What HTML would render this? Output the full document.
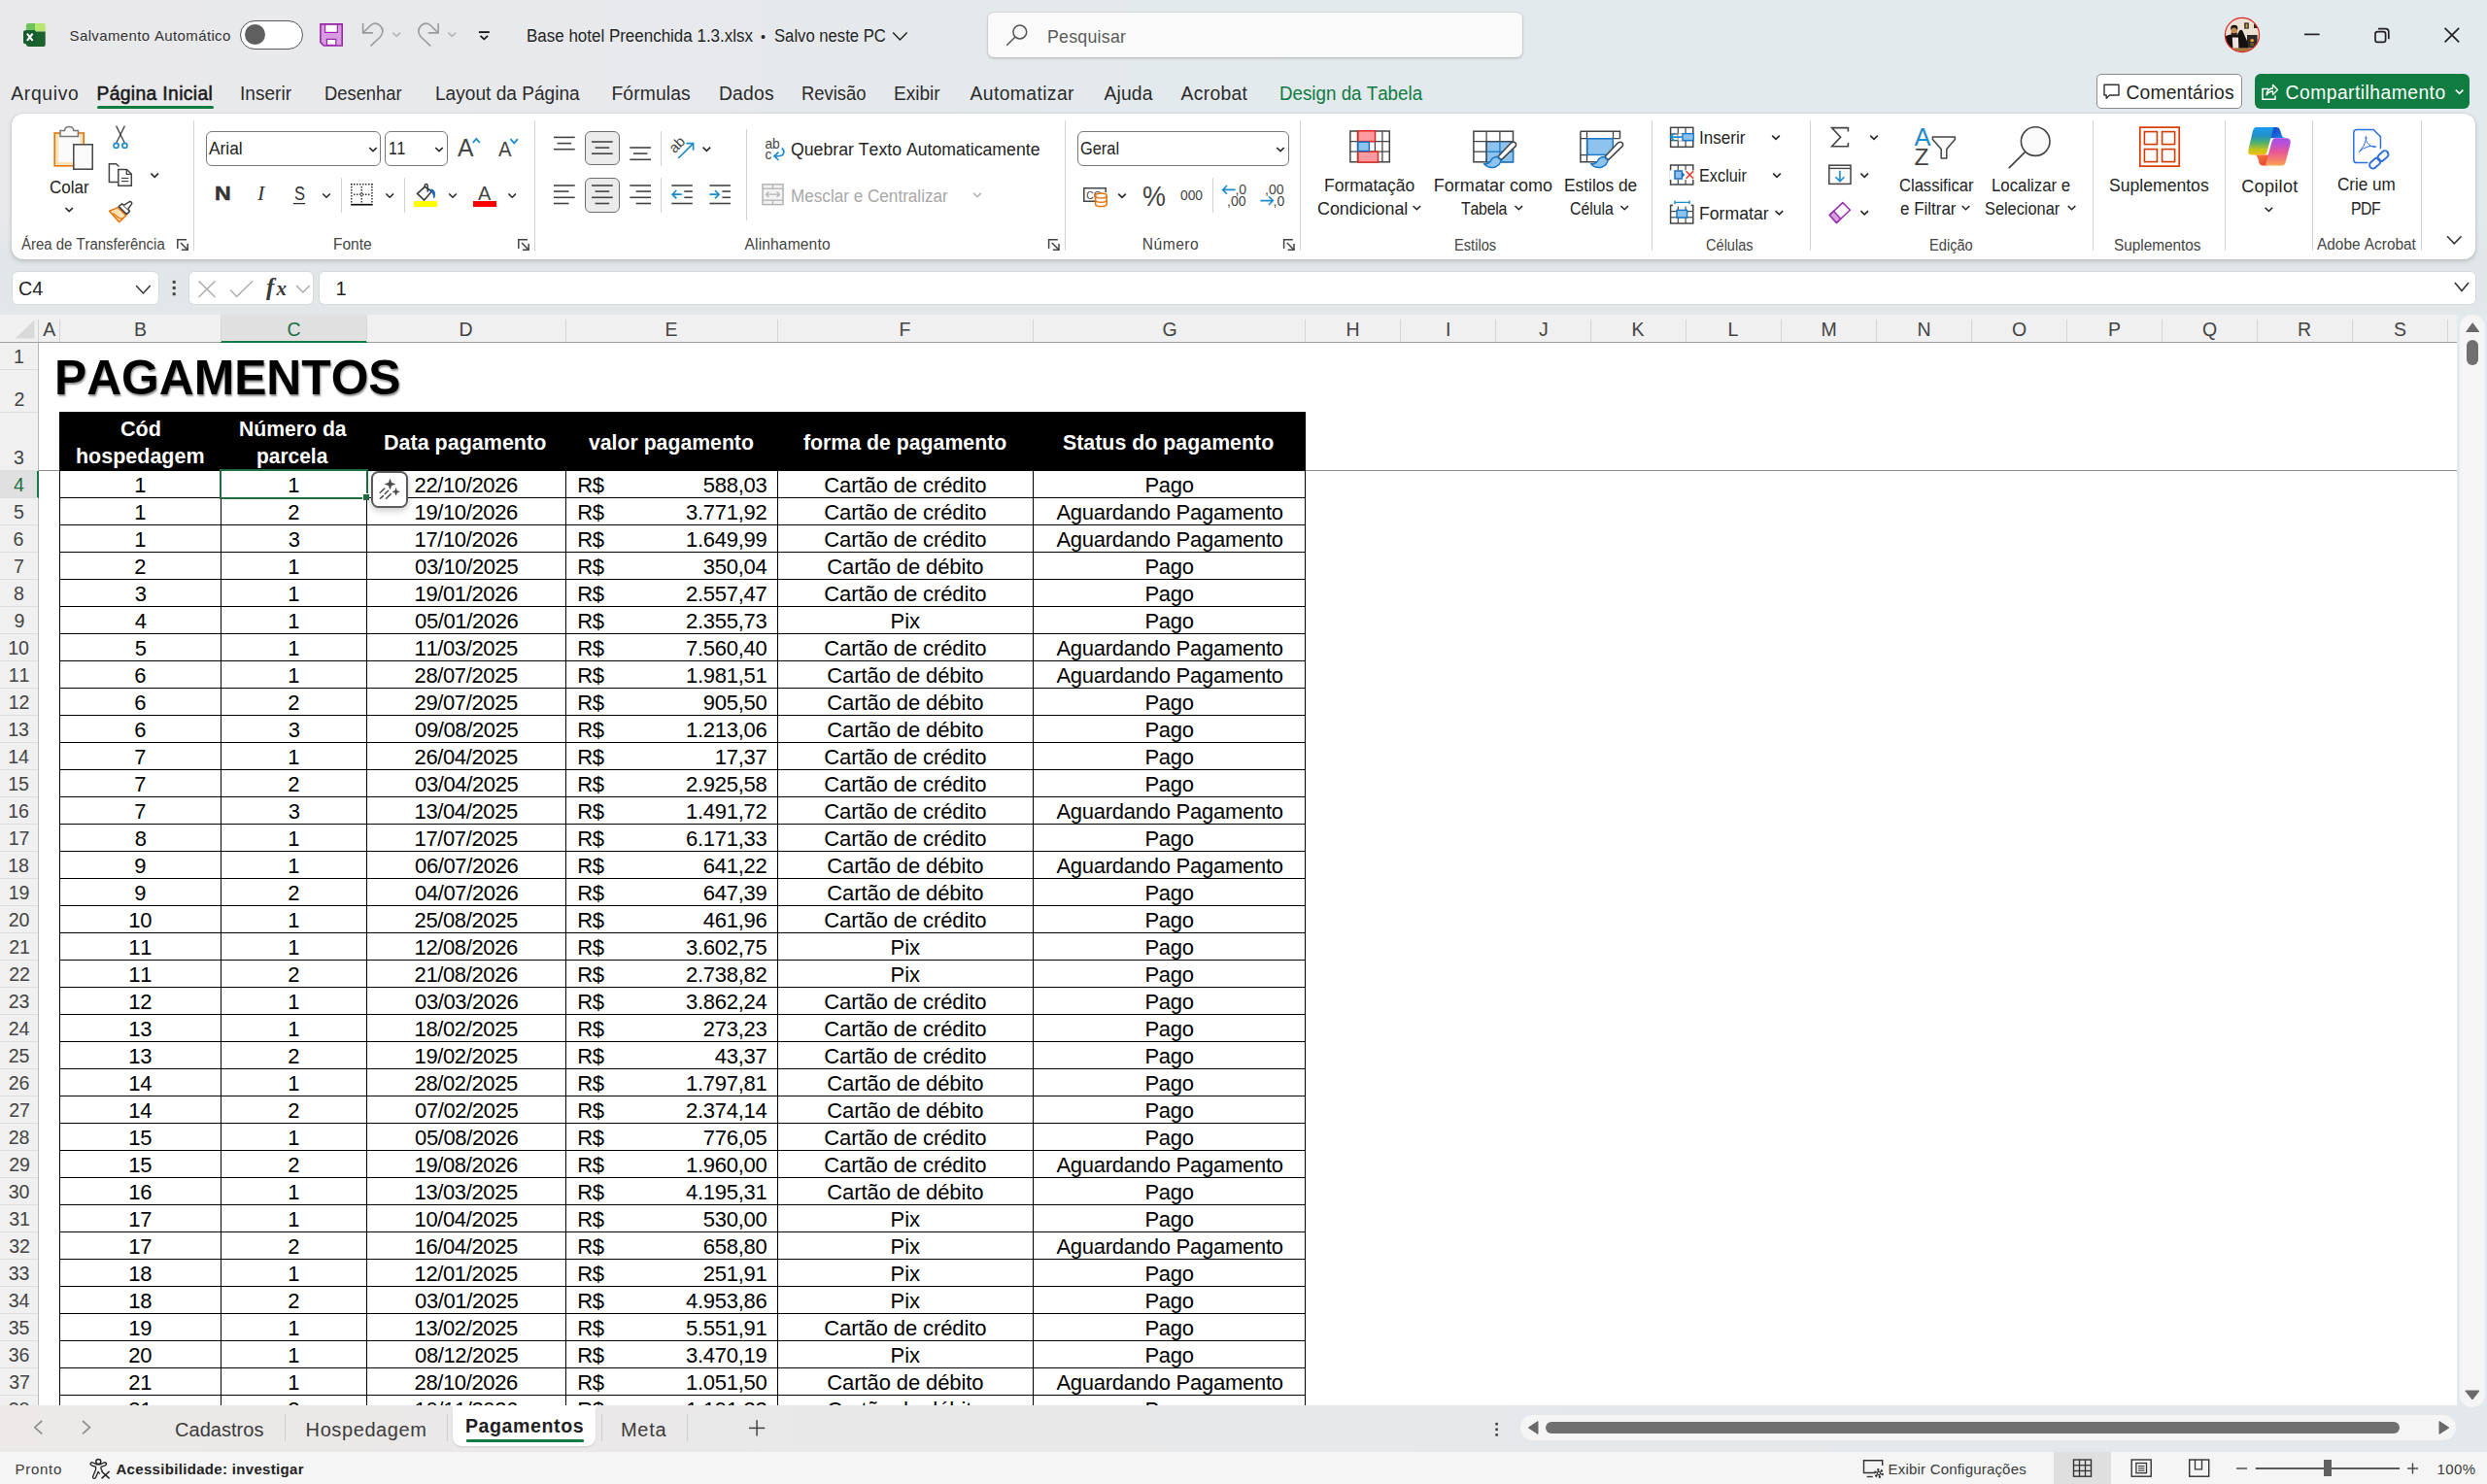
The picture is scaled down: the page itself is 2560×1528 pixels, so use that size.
<!DOCTYPE html>
<html lang="pt-BR"><head><meta charset="utf-8"><title>Base hotel Preenchida 1.3.xlsx - Excel</title>
<style>
html,body{margin:0;padding:0}
body{width:2560px;height:1528px;overflow:hidden;position:relative;font-family:"Liberation Sans",sans-serif;
background:linear-gradient(90deg,#e9e9eb 0%,#e7e9ec 28%,#e3e9ec 42%,#e2eaee 100%);}
#r{position:absolute;left:0;top:0;width:2560px;height:1528px;overflow:hidden}
#r>div{position:absolute}
#r>span{position:absolute;white-space:pre;line-height:1;font-kerning:none}
#r>svg{position:absolute;left:0;top:0}
.s{font-family:"Liberation Serif",serif}
</style></head>
<body><div id="r">
<div style="left:1016.5px;top:13px;width:550.5px;height:46px;background:#fafafa;border-radius:6px;box-shadow:0 1px 3px rgba(0,0,0,.22),0 0 0 1px rgba(0,0,0,.04);"></div>
<div style="left:247px;top:21px;width:63px;height:28px;background:#fff;border:1.3px solid #555;border-radius:16px;"></div>
<div style="left:252px;top:25.2px;width:21px;height:21px;background:#5f5f5f;border-radius:50%;"></div>
<div style="left:2157.5px;top:76px;width:150px;height:35.5px;background:#fff;border:1px solid #8a8a8a;border-radius:5px;box-sizing:border-box;"></div>
<div style="left:2321px;top:76px;width:221px;height:36px;background:#107c41;border-radius:6px;"></div>
<div style="left:100px;top:109.3px;width:120px;height:3px;background:#107c41;border-radius:2px;"></div>
<div style="left:0px;top:225px;width:2560px;height:99px;background:linear-gradient(180deg, rgba(225,230,233,0) 0%, #e1e6e9 42%, #e2e7ea 100%);"></div>
<div style="left:12px;top:117px;width:2536px;height:150px;background:#fff;border-radius:12px;box-shadow:0 2px 5px rgba(0,0,0,.18),0 0 2px rgba(0,0,0,.10);"></div>
<div style="left:199.1px;top:124px;width:1px;height:134px;background:#d4d4d4;"></div>
<div style="left:550.0px;top:124px;width:1px;height:134px;background:#d4d4d4;"></div>
<div style="left:1096.0px;top:124px;width:1px;height:134px;background:#d4d4d4;"></div>
<div style="left:1338.0px;top:124px;width:1px;height:134px;background:#d4d4d4;"></div>
<div style="left:1700.1px;top:124px;width:1px;height:134px;background:#d4d4d4;"></div>
<div style="left:1863.1px;top:124px;width:1px;height:134px;background:#d4d4d4;"></div>
<div style="left:2154.1px;top:124px;width:1px;height:134px;background:#d4d4d4;"></div>
<div style="left:2289.9px;top:124px;width:1px;height:134px;background:#d4d4d4;"></div>
<div style="left:2380.0px;top:124px;width:1px;height:134px;background:#d4d4d4;"></div>
<div style="left:2491.9px;top:124px;width:1px;height:134px;background:#d4d4d4;"></div>
<div style="left:768px;top:133px;width:1px;height:94px;background:#d4d4d4;"></div>
<div style="left:351.1px;top:183px;width:1px;height:35.599999999999994px;background:#d4d4d4;"></div>
<div style="left:415.9px;top:183px;width:1px;height:35.599999999999994px;background:#d4d4d4;"></div>
<div style="left:679.9px;top:135px;width:1px;height:35.5px;background:#d4d4d4;"></div>
<div style="left:679.9px;top:183.4px;width:1px;height:35.19999999999999px;background:#d4d4d4;"></div>
<div style="left:1248.0px;top:183.4px;width:1px;height:35.19999999999999px;background:#d4d4d4;"></div>
<div style="left:212.3px;top:135.3px;width:180.2px;height:35.4px;border:1px solid #7a7a7a;border-radius:6px;box-sizing:border-box;background:#fff;"></div>
<div style="left:396.2px;top:135.3px;width:64.4px;height:35.4px;border:1px solid #7a7a7a;border-radius:6px;box-sizing:border-box;background:#fff;"></div>
<div style="left:1109.2px;top:135.3px;width:217.4px;height:35.4px;border:1px solid #7a7a7a;border-radius:6px;box-sizing:border-box;background:#fff;"></div>
<div style="left:602.2px;top:135.3px;width:35.5px;height:35.2px;border:1px solid #6f6f6f;border-radius:6px;box-sizing:border-box;background:#ebebeb;"></div>
<div style="left:602.2px;top:183.4px;width:35.5px;height:35.2px;border:1px solid #6f6f6f;border-radius:6px;box-sizing:border-box;background:#ebebeb;"></div>
<div style="left:12.8px;top:279.6px;width:150.6px;height:33.5px;background:#fff;border-radius:5.5px;box-shadow:0 0 0 1px rgba(0,0,0,.05);"></div>
<div style="left:195px;top:279.5px;width:126.7px;height:33.5px;background:#fff;border-radius:5px;box-shadow:0 0 0 1px rgba(0,0,0,.06);"></div>
<div style="left:329px;top:279.5px;width:2219px;height:33.5px;background:#fff;border-radius:5px;box-shadow:0 0 0 1px rgba(0,0,0,.06);"></div>
<div style="left:0px;top:324px;width:2529px;height:1123px;background:#fff;"></div>
<div style="left:0px;top:324px;width:2529px;height:28px;background:#f0f0f0;"></div>
<div style="left:0px;top:352px;width:2529px;height:1px;background:#a0a0a0;"></div>
<div style="left:0px;top:353px;width:39.5px;height:1094px;background:#f0f0f0;"></div>
<div style="left:39px;top:353px;width:1px;height:1094px;background:#b8b8b8;"></div>
<div style="left:2532px;top:324px;width:26px;height:1124.7px;background:#f5f5f5;border-radius:13px;"></div>
<div style="left:2539px;top:350.4px;width:12px;height:25.2px;background:#707070;border-radius:6px;"></div>
<div style="left:227.4px;top:324px;width:150.6px;height:28px;background:#e0e0e0;"></div>
<div style="left:227.4px;top:350.6px;width:150.6px;height:2.2px;background:#107c41;"></div>
<div style="left:39px;top:329px;width:1px;height:23px;background:#d0d0d0;"></div>
<div style="left:61px;top:329px;width:1px;height:23px;background:#d6d6d6;"></div>
<div style="left:227px;top:329px;width:1px;height:23px;background:#d6d6d6;"></div>
<div style="left:377px;top:329px;width:1px;height:23px;background:#d6d6d6;"></div>
<div style="left:582px;top:329px;width:1px;height:23px;background:#d6d6d6;"></div>
<div style="left:800px;top:329px;width:1px;height:23px;background:#d6d6d6;"></div>
<div style="left:1063px;top:329px;width:1px;height:23px;background:#d6d6d6;"></div>
<div style="left:1343px;top:329px;width:1px;height:23px;background:#d6d6d6;"></div>
<div style="left:1441px;top:329px;width:1px;height:23px;background:#d6d6d6;"></div>
<div style="left:1539px;top:329px;width:1px;height:23px;background:#d6d6d6;"></div>
<div style="left:1637px;top:329px;width:1px;height:23px;background:#d6d6d6;"></div>
<div style="left:1735px;top:329px;width:1px;height:23px;background:#d6d6d6;"></div>
<div style="left:1833px;top:329px;width:1px;height:23px;background:#d6d6d6;"></div>
<div style="left:1931px;top:329px;width:1px;height:23px;background:#d6d6d6;"></div>
<div style="left:2029px;top:329px;width:1px;height:23px;background:#d6d6d6;"></div>
<div style="left:2127px;top:329px;width:1px;height:23px;background:#d6d6d6;"></div>
<div style="left:2225px;top:329px;width:1px;height:23px;background:#d6d6d6;"></div>
<div style="left:2323px;top:329px;width:1px;height:23px;background:#d6d6d6;"></div>
<div style="left:2421px;top:329px;width:1px;height:23px;background:#d6d6d6;"></div>
<div style="left:2519px;top:329px;width:1px;height:23px;background:#d6d6d6;"></div>
<span style="left:44.25px;top:330.00px;font-size:19.5px;color:#444;">A</span>
<span style="left:138.00px;top:330.00px;font-size:19.5px;color:#444;">B</span>
<span style="left:295.50px;top:330.00px;font-size:19.5px;color:#1e6e42;">C</span>
<span style="left:472.50px;top:330.00px;font-size:19.5px;color:#444;">D</span>
<span style="left:684.50px;top:330.00px;font-size:19.5px;color:#444;">E</span>
<span style="left:925.50px;top:330.00px;font-size:19.5px;color:#444;">F</span>
<span style="left:1196.50px;top:330.00px;font-size:19.5px;color:#444;">G</span>
<span style="left:1385.50px;top:330.00px;font-size:19.5px;color:#444;">H</span>
<span style="left:1488.00px;top:330.00px;font-size:19.5px;color:#444;">I</span>
<span style="left:1584.00px;top:330.00px;font-size:19.5px;color:#444;">J</span>
<span style="left:1679.50px;top:330.00px;font-size:19.5px;color:#444;">K</span>
<span style="left:1778.50px;top:330.00px;font-size:19.5px;color:#444;">L</span>
<span style="left:1874.50px;top:330.00px;font-size:19.5px;color:#444;">M</span>
<span style="left:1973.50px;top:330.00px;font-size:19.5px;color:#444;">N</span>
<span style="left:2071.00px;top:330.00px;font-size:19.5px;color:#444;">O</span>
<span style="left:2170.00px;top:330.00px;font-size:19.5px;color:#444;">P</span>
<span style="left:2267.00px;top:330.00px;font-size:19.5px;color:#444;">Q</span>
<span style="left:2365.00px;top:330.00px;font-size:19.5px;color:#444;">R</span>
<span style="left:2464.00px;top:330.00px;font-size:19.5px;color:#444;">S</span>
<div style="left:0px;top:485px;width:39px;height:28px;background:#e0e0e0;"></div>
<div style="left:37.6px;top:485px;width:2.4px;height:28px;background:#107c41;"></div>
<div style="left:0px;top:380.1px;width:39px;height:1px;background:#dedede;"></div>
<span style="left:14.10px;top:358.20px;font-size:19.6px;color:#444;letter-spacing:-0.300px;">1</span>
<div style="left:0px;top:423.5px;width:39px;height:1px;background:#dedede;"></div>
<span style="left:14.60px;top:401.60px;font-size:19.6px;color:#444;letter-spacing:-0.300px;">2</span>
<div style="left:0px;top:484.0px;width:39px;height:1px;background:#dedede;"></div>
<span style="left:14.10px;top:462.10px;font-size:19.6px;color:#444;letter-spacing:-0.300px;">3</span>
<div style="left:0px;top:512.0px;width:39px;height:1px;background:#dedede;"></div>
<span style="left:14.10px;top:490.10px;font-size:19.6px;color:#1e6e42;letter-spacing:-0.300px;">4</span>
<div style="left:0px;top:540.0px;width:39px;height:1px;background:#dedede;"></div>
<span style="left:14.10px;top:518.10px;font-size:19.6px;color:#444;letter-spacing:-0.300px;">5</span>
<div style="left:0px;top:568.0px;width:39px;height:1px;background:#dedede;"></div>
<span style="left:13.60px;top:546.10px;font-size:19.6px;color:#444;letter-spacing:-0.300px;">6</span>
<div style="left:0px;top:596.0px;width:39px;height:1px;background:#dedede;"></div>
<span style="left:14.10px;top:574.10px;font-size:19.6px;color:#444;letter-spacing:-0.300px;">7</span>
<div style="left:0px;top:624.0px;width:39px;height:1px;background:#dedede;"></div>
<span style="left:14.10px;top:602.10px;font-size:19.6px;color:#444;letter-spacing:-0.300px;">8</span>
<div style="left:0px;top:652.0px;width:39px;height:1px;background:#dedede;"></div>
<span style="left:14.60px;top:630.10px;font-size:19.6px;color:#444;letter-spacing:-0.300px;">9</span>
<div style="left:0px;top:680.0px;width:39px;height:1px;background:#dedede;"></div>
<span style="left:8.30px;top:658.10px;font-size:19.6px;color:#444;letter-spacing:-0.300px;">10</span>
<div style="left:0px;top:708.0px;width:39px;height:1px;background:#dedede;"></div>
<span style="left:8.80px;top:686.10px;font-size:19.6px;color:#444;letter-spacing:-0.300px;">11</span>
<div style="left:0px;top:736.0px;width:39px;height:1px;background:#dedede;"></div>
<span style="left:8.80px;top:714.10px;font-size:19.6px;color:#444;letter-spacing:-0.300px;">12</span>
<div style="left:0px;top:764.0px;width:39px;height:1px;background:#dedede;"></div>
<span style="left:8.30px;top:742.10px;font-size:19.6px;color:#444;letter-spacing:-0.300px;">13</span>
<div style="left:0px;top:792.0px;width:39px;height:1px;background:#dedede;"></div>
<span style="left:8.30px;top:770.10px;font-size:19.6px;color:#444;letter-spacing:-0.300px;">14</span>
<div style="left:0px;top:820.0px;width:39px;height:1px;background:#dedede;"></div>
<span style="left:8.30px;top:798.10px;font-size:19.6px;color:#444;letter-spacing:-0.300px;">15</span>
<div style="left:0px;top:848.0px;width:39px;height:1px;background:#dedede;"></div>
<span style="left:8.30px;top:826.10px;font-size:19.6px;color:#444;letter-spacing:-0.300px;">16</span>
<div style="left:0px;top:876.0px;width:39px;height:1px;background:#dedede;"></div>
<span style="left:8.80px;top:854.10px;font-size:19.6px;color:#444;letter-spacing:-0.300px;">17</span>
<div style="left:0px;top:904.0px;width:39px;height:1px;background:#dedede;"></div>
<span style="left:8.30px;top:882.10px;font-size:19.6px;color:#444;letter-spacing:-0.300px;">18</span>
<div style="left:0px;top:932.0px;width:39px;height:1px;background:#dedede;"></div>
<span style="left:8.80px;top:910.10px;font-size:19.6px;color:#444;letter-spacing:-0.300px;">19</span>
<div style="left:0px;top:960.0px;width:39px;height:1px;background:#dedede;"></div>
<span style="left:8.80px;top:938.10px;font-size:19.6px;color:#444;letter-spacing:-0.300px;">20</span>
<div style="left:0px;top:988.0px;width:39px;height:1px;background:#dedede;"></div>
<span style="left:9.30px;top:966.10px;font-size:19.6px;color:#444;letter-spacing:-0.300px;">21</span>
<div style="left:0px;top:1016.0px;width:39px;height:1px;background:#dedede;"></div>
<span style="left:9.30px;top:994.10px;font-size:19.6px;color:#444;letter-spacing:-0.300px;">22</span>
<div style="left:0px;top:1044.0px;width:39px;height:1px;background:#dedede;"></div>
<span style="left:8.80px;top:1022.10px;font-size:19.6px;color:#444;letter-spacing:-0.300px;">23</span>
<div style="left:0px;top:1072.0px;width:39px;height:1px;background:#dedede;"></div>
<span style="left:8.80px;top:1050.10px;font-size:19.6px;color:#444;letter-spacing:-0.300px;">24</span>
<div style="left:0px;top:1100.0px;width:39px;height:1px;background:#dedede;"></div>
<span style="left:8.80px;top:1078.10px;font-size:19.6px;color:#444;letter-spacing:-0.300px;">25</span>
<div style="left:0px;top:1128.0px;width:39px;height:1px;background:#dedede;"></div>
<span style="left:8.80px;top:1106.10px;font-size:19.6px;color:#444;letter-spacing:-0.300px;">26</span>
<div style="left:0px;top:1156.0px;width:39px;height:1px;background:#dedede;"></div>
<span style="left:9.30px;top:1134.10px;font-size:19.6px;color:#444;letter-spacing:-0.300px;">27</span>
<div style="left:0px;top:1184.0px;width:39px;height:1px;background:#dedede;"></div>
<span style="left:8.80px;top:1162.10px;font-size:19.6px;color:#444;letter-spacing:-0.300px;">28</span>
<div style="left:0px;top:1212.0px;width:39px;height:1px;background:#dedede;"></div>
<span style="left:9.30px;top:1190.10px;font-size:19.6px;color:#444;letter-spacing:-0.300px;">29</span>
<div style="left:0px;top:1240.0px;width:39px;height:1px;background:#dedede;"></div>
<span style="left:8.80px;top:1218.10px;font-size:19.6px;color:#444;letter-spacing:-0.300px;">30</span>
<div style="left:0px;top:1268.0px;width:39px;height:1px;background:#dedede;"></div>
<span style="left:9.30px;top:1246.10px;font-size:19.6px;color:#444;letter-spacing:-0.300px;">31</span>
<div style="left:0px;top:1296.0px;width:39px;height:1px;background:#dedede;"></div>
<span style="left:9.30px;top:1274.10px;font-size:19.6px;color:#444;letter-spacing:-0.300px;">32</span>
<div style="left:0px;top:1324.0px;width:39px;height:1px;background:#dedede;"></div>
<span style="left:8.80px;top:1302.10px;font-size:19.6px;color:#444;letter-spacing:-0.300px;">33</span>
<div style="left:0px;top:1352.0px;width:39px;height:1px;background:#dedede;"></div>
<span style="left:8.80px;top:1330.10px;font-size:19.6px;color:#444;letter-spacing:-0.300px;">34</span>
<div style="left:0px;top:1380.0px;width:39px;height:1px;background:#dedede;"></div>
<span style="left:8.80px;top:1358.10px;font-size:19.6px;color:#444;letter-spacing:-0.300px;">35</span>
<div style="left:0px;top:1408.0px;width:39px;height:1px;background:#dedede;"></div>
<span style="left:8.80px;top:1386.10px;font-size:19.6px;color:#444;letter-spacing:-0.300px;">36</span>
<div style="left:0px;top:1436.0px;width:39px;height:1px;background:#dedede;"></div>
<span style="left:9.30px;top:1414.10px;font-size:19.6px;color:#444;letter-spacing:-0.300px;">37</span>
<div style="left:0px;top:1464.0px;width:39px;height:1px;background:#dedede;"></div>
<span style="left:8.80px;top:1442.10px;font-size:19.6px;color:#444;letter-spacing:-0.300px;">38</span>
<div style="left:40px;top:484px;width:2489px;height:1px;background:#8c8c8c;"></div>
<span style="left:55.52px;top:364.00px;font-size:50px;color:#000;font-weight:700;transform:scaleX(0.9949);transform-origin:0 0;text-shadow:1px 1.5px 2px rgba(0,0,0,.45);">PAGAMENTOS</span>
<div style="left:61px;top:424px;width:1283px;height:61px;background:#000;"></div>
<span style="left:123.80px;top:431.00px;font-size:22px;color:#fff;font-weight:700;transform:scaleX(0.9800);transform-origin:0 0;">Cód</span>
<span style="left:77.62px;top:459.00px;font-size:22px;color:#fff;font-weight:700;transform:scaleX(0.9766);transform-origin:0 0;">hospedagem</span>
<span style="left:245.64px;top:431.00px;font-size:22px;color:#fff;font-weight:700;transform:scaleX(0.9627);transform-origin:0 0;">Número da</span>
<span style="left:264.45px;top:459.00px;font-size:22px;color:#fff;font-weight:700;transform:scaleX(0.9516);transform-origin:0 0;">parcela</span>
<span style="left:395.42px;top:445.00px;font-size:22px;color:#fff;font-weight:700;transform:scaleX(0.9776);transform-origin:0 0;">Data pagamento</span>
<span style="left:606.40px;top:445.00px;font-size:22px;color:#fff;font-weight:700;transform:scaleX(0.9652);transform-origin:0 0;">valor pagamento</span>
<span style="left:827.10px;top:445.00px;font-size:22px;color:#fff;font-weight:700;transform:scaleX(0.9670);transform-origin:0 0;">forma de pagamento</span>
<span style="left:1094.20px;top:445.00px;font-size:22px;color:#fff;font-weight:700;transform:scaleX(0.9711);transform-origin:0 0;">Status do pagamento</span>
<div style="left:61px;top:484px;width:1px;height:963px;background:#000;"></div>
<div style="left:227px;top:484px;width:1px;height:963px;background:#000;"></div>
<div style="left:377px;top:484px;width:1px;height:963px;background:#000;"></div>
<div style="left:582px;top:484px;width:1px;height:963px;background:#000;"></div>
<div style="left:800px;top:484px;width:1px;height:963px;background:#000;"></div>
<div style="left:1063px;top:484px;width:1px;height:963px;background:#000;"></div>
<div style="left:1343px;top:484px;width:1px;height:963px;background:#000;"></div>
<div style="left:61px;top:512px;width:1283px;height:1px;background:#000;"></div>
<span style="left:138.30px;top:489.00px;font-size:22px;color:#000;letter-spacing:-0.380px;">1</span>
<span style="left:296.30px;top:489.00px;font-size:22px;color:#000;letter-spacing:-0.380px;">1</span>
<span style="left:426.57px;top:489.00px;font-size:22px;color:#000;letter-spacing:-0.380px;">22/10/2026</span>
<span style="left:594.20px;top:489.00px;font-size:22px;color:#000;letter-spacing:-0.380px;">R$</span>
<span style="left:723.80px;top:489.00px;font-size:22px;color:#000;letter-spacing:-0.250px;">588,03</span>
<span style="left:848.34px;top:489.00px;font-size:22px;color:#000;letter-spacing:-0.100px;">Cartão de crédito</span>
<span style="left:1178.42px;top:489.00px;font-size:22px;color:#000;letter-spacing:-0.260px;">Pago</span>
<div style="left:61px;top:540px;width:1283px;height:1px;background:#000;"></div>
<span style="left:138.30px;top:517.00px;font-size:22px;color:#000;letter-spacing:-0.380px;">1</span>
<span style="left:296.30px;top:517.00px;font-size:22px;color:#000;letter-spacing:-0.380px;">2</span>
<span style="left:426.57px;top:517.00px;font-size:22px;color:#000;letter-spacing:-0.380px;">19/10/2026</span>
<span style="left:594.20px;top:517.00px;font-size:22px;color:#000;letter-spacing:-0.380px;">R$</span>
<span style="left:705.95px;top:517.00px;font-size:22px;color:#000;letter-spacing:-0.250px;">3.771,92</span>
<span style="left:848.34px;top:517.00px;font-size:22px;color:#000;letter-spacing:-0.100px;">Cartão de crédito</span>
<span style="left:1087.43px;top:517.00px;font-size:22px;color:#000;letter-spacing:-0.260px;">Aguardando Pagamento</span>
<div style="left:61px;top:568px;width:1283px;height:1px;background:#000;"></div>
<span style="left:138.30px;top:545.00px;font-size:22px;color:#000;letter-spacing:-0.380px;">1</span>
<span style="left:296.80px;top:545.00px;font-size:22px;color:#000;letter-spacing:-0.380px;">3</span>
<span style="left:426.57px;top:545.00px;font-size:22px;color:#000;letter-spacing:-0.380px;">17/10/2026</span>
<span style="left:594.20px;top:545.00px;font-size:22px;color:#000;letter-spacing:-0.380px;">R$</span>
<span style="left:705.95px;top:545.00px;font-size:22px;color:#000;letter-spacing:-0.250px;">1.649,99</span>
<span style="left:848.34px;top:545.00px;font-size:22px;color:#000;letter-spacing:-0.100px;">Cartão de crédito</span>
<span style="left:1087.43px;top:545.00px;font-size:22px;color:#000;letter-spacing:-0.260px;">Aguardando Pagamento</span>
<div style="left:61px;top:596px;width:1283px;height:1px;background:#000;"></div>
<span style="left:138.30px;top:573.00px;font-size:22px;color:#000;letter-spacing:-0.380px;">2</span>
<span style="left:296.30px;top:573.00px;font-size:22px;color:#000;letter-spacing:-0.380px;">1</span>
<span style="left:427.07px;top:573.00px;font-size:22px;color:#000;letter-spacing:-0.380px;">03/10/2025</span>
<span style="left:594.20px;top:573.00px;font-size:22px;color:#000;letter-spacing:-0.380px;">R$</span>
<span style="left:723.80px;top:573.00px;font-size:22px;color:#000;letter-spacing:-0.250px;">350,04</span>
<span style="left:851.33px;top:573.00px;font-size:22px;color:#000;letter-spacing:-0.100px;">Cartão de débito</span>
<span style="left:1178.42px;top:573.00px;font-size:22px;color:#000;letter-spacing:-0.260px;">Pago</span>
<div style="left:61px;top:624px;width:1283px;height:1px;background:#000;"></div>
<span style="left:138.80px;top:601.00px;font-size:22px;color:#000;letter-spacing:-0.380px;">3</span>
<span style="left:296.30px;top:601.00px;font-size:22px;color:#000;letter-spacing:-0.380px;">1</span>
<span style="left:426.57px;top:601.00px;font-size:22px;color:#000;letter-spacing:-0.380px;">19/01/2026</span>
<span style="left:594.20px;top:601.00px;font-size:22px;color:#000;letter-spacing:-0.380px;">R$</span>
<span style="left:705.95px;top:601.00px;font-size:22px;color:#000;letter-spacing:-0.250px;">2.557,47</span>
<span style="left:848.34px;top:601.00px;font-size:22px;color:#000;letter-spacing:-0.100px;">Cartão de crédito</span>
<span style="left:1178.42px;top:601.00px;font-size:22px;color:#000;letter-spacing:-0.260px;">Pago</span>
<div style="left:61px;top:652px;width:1283px;height:1px;background:#000;"></div>
<span style="left:138.80px;top:629.00px;font-size:22px;color:#000;letter-spacing:-0.380px;">4</span>
<span style="left:296.30px;top:629.00px;font-size:22px;color:#000;letter-spacing:-0.380px;">1</span>
<span style="left:427.07px;top:629.00px;font-size:22px;color:#000;letter-spacing:-0.380px;">05/01/2026</span>
<span style="left:594.20px;top:629.00px;font-size:22px;color:#000;letter-spacing:-0.380px;">R$</span>
<span style="left:705.95px;top:629.00px;font-size:22px;color:#000;letter-spacing:-0.250px;">2.355,73</span>
<span style="left:916.62px;top:629.00px;font-size:22px;color:#000;letter-spacing:-0.100px;">Pix</span>
<span style="left:1178.42px;top:629.00px;font-size:22px;color:#000;letter-spacing:-0.260px;">Pago</span>
<div style="left:61px;top:680px;width:1283px;height:1px;background:#000;"></div>
<span style="left:138.80px;top:657.00px;font-size:22px;color:#000;letter-spacing:-0.380px;">5</span>
<span style="left:296.30px;top:657.00px;font-size:22px;color:#000;letter-spacing:-0.380px;">1</span>
<span style="left:426.57px;top:657.00px;font-size:22px;color:#000;letter-spacing:-0.380px;">11/03/2025</span>
<span style="left:594.20px;top:657.00px;font-size:22px;color:#000;letter-spacing:-0.380px;">R$</span>
<span style="left:705.95px;top:657.00px;font-size:22px;color:#000;letter-spacing:-0.250px;">7.560,40</span>
<span style="left:848.34px;top:657.00px;font-size:22px;color:#000;letter-spacing:-0.100px;">Cartão de crédito</span>
<span style="left:1087.43px;top:657.00px;font-size:22px;color:#000;letter-spacing:-0.260px;">Aguardando Pagamento</span>
<div style="left:61px;top:708px;width:1283px;height:1px;background:#000;"></div>
<span style="left:138.30px;top:685.00px;font-size:22px;color:#000;letter-spacing:-0.380px;">6</span>
<span style="left:296.30px;top:685.00px;font-size:22px;color:#000;letter-spacing:-0.380px;">1</span>
<span style="left:426.57px;top:685.00px;font-size:22px;color:#000;letter-spacing:-0.380px;">28/07/2025</span>
<span style="left:594.20px;top:685.00px;font-size:22px;color:#000;letter-spacing:-0.380px;">R$</span>
<span style="left:705.95px;top:685.00px;font-size:22px;color:#000;letter-spacing:-0.250px;">1.981,51</span>
<span style="left:851.33px;top:685.00px;font-size:22px;color:#000;letter-spacing:-0.100px;">Cartão de débito</span>
<span style="left:1087.43px;top:685.00px;font-size:22px;color:#000;letter-spacing:-0.260px;">Aguardando Pagamento</span>
<div style="left:61px;top:736px;width:1283px;height:1px;background:#000;"></div>
<span style="left:138.30px;top:713.00px;font-size:22px;color:#000;letter-spacing:-0.380px;">6</span>
<span style="left:296.30px;top:713.00px;font-size:22px;color:#000;letter-spacing:-0.380px;">2</span>
<span style="left:426.57px;top:713.00px;font-size:22px;color:#000;letter-spacing:-0.380px;">29/07/2025</span>
<span style="left:594.20px;top:713.00px;font-size:22px;color:#000;letter-spacing:-0.380px;">R$</span>
<span style="left:723.80px;top:713.00px;font-size:22px;color:#000;letter-spacing:-0.250px;">905,50</span>
<span style="left:851.33px;top:713.00px;font-size:22px;color:#000;letter-spacing:-0.100px;">Cartão de débito</span>
<span style="left:1178.42px;top:713.00px;font-size:22px;color:#000;letter-spacing:-0.260px;">Pago</span>
<div style="left:61px;top:764px;width:1283px;height:1px;background:#000;"></div>
<span style="left:138.30px;top:741.00px;font-size:22px;color:#000;letter-spacing:-0.380px;">6</span>
<span style="left:296.80px;top:741.00px;font-size:22px;color:#000;letter-spacing:-0.380px;">3</span>
<span style="left:427.07px;top:741.00px;font-size:22px;color:#000;letter-spacing:-0.380px;">09/08/2025</span>
<span style="left:594.20px;top:741.00px;font-size:22px;color:#000;letter-spacing:-0.380px;">R$</span>
<span style="left:705.95px;top:741.00px;font-size:22px;color:#000;letter-spacing:-0.250px;">1.213,06</span>
<span style="left:851.33px;top:741.00px;font-size:22px;color:#000;letter-spacing:-0.100px;">Cartão de débito</span>
<span style="left:1178.42px;top:741.00px;font-size:22px;color:#000;letter-spacing:-0.260px;">Pago</span>
<div style="left:61px;top:792px;width:1283px;height:1px;background:#000;"></div>
<span style="left:138.30px;top:769.00px;font-size:22px;color:#000;letter-spacing:-0.380px;">7</span>
<span style="left:296.30px;top:769.00px;font-size:22px;color:#000;letter-spacing:-0.380px;">1</span>
<span style="left:426.57px;top:769.00px;font-size:22px;color:#000;letter-spacing:-0.380px;">26/04/2025</span>
<span style="left:594.20px;top:769.00px;font-size:22px;color:#000;letter-spacing:-0.380px;">R$</span>
<span style="left:735.78px;top:769.00px;font-size:22px;color:#000;letter-spacing:-0.250px;">17,37</span>
<span style="left:848.34px;top:769.00px;font-size:22px;color:#000;letter-spacing:-0.100px;">Cartão de crédito</span>
<span style="left:1178.42px;top:769.00px;font-size:22px;color:#000;letter-spacing:-0.260px;">Pago</span>
<div style="left:61px;top:820px;width:1283px;height:1px;background:#000;"></div>
<span style="left:138.30px;top:797.00px;font-size:22px;color:#000;letter-spacing:-0.380px;">7</span>
<span style="left:296.30px;top:797.00px;font-size:22px;color:#000;letter-spacing:-0.380px;">2</span>
<span style="left:427.07px;top:797.00px;font-size:22px;color:#000;letter-spacing:-0.380px;">03/04/2025</span>
<span style="left:594.20px;top:797.00px;font-size:22px;color:#000;letter-spacing:-0.380px;">R$</span>
<span style="left:705.95px;top:797.00px;font-size:22px;color:#000;letter-spacing:-0.250px;">2.925,58</span>
<span style="left:848.34px;top:797.00px;font-size:22px;color:#000;letter-spacing:-0.100px;">Cartão de crédito</span>
<span style="left:1178.42px;top:797.00px;font-size:22px;color:#000;letter-spacing:-0.260px;">Pago</span>
<div style="left:61px;top:848px;width:1283px;height:1px;background:#000;"></div>
<span style="left:138.30px;top:825.00px;font-size:22px;color:#000;letter-spacing:-0.380px;">7</span>
<span style="left:296.80px;top:825.00px;font-size:22px;color:#000;letter-spacing:-0.380px;">3</span>
<span style="left:426.57px;top:825.00px;font-size:22px;color:#000;letter-spacing:-0.380px;">13/04/2025</span>
<span style="left:594.20px;top:825.00px;font-size:22px;color:#000;letter-spacing:-0.380px;">R$</span>
<span style="left:705.95px;top:825.00px;font-size:22px;color:#000;letter-spacing:-0.250px;">1.491,72</span>
<span style="left:848.34px;top:825.00px;font-size:22px;color:#000;letter-spacing:-0.100px;">Cartão de crédito</span>
<span style="left:1087.43px;top:825.00px;font-size:22px;color:#000;letter-spacing:-0.260px;">Aguardando Pagamento</span>
<div style="left:61px;top:876px;width:1283px;height:1px;background:#000;"></div>
<span style="left:138.80px;top:853.00px;font-size:22px;color:#000;letter-spacing:-0.380px;">8</span>
<span style="left:296.30px;top:853.00px;font-size:22px;color:#000;letter-spacing:-0.380px;">1</span>
<span style="left:426.57px;top:853.00px;font-size:22px;color:#000;letter-spacing:-0.380px;">17/07/2025</span>
<span style="left:594.20px;top:853.00px;font-size:22px;color:#000;letter-spacing:-0.380px;">R$</span>
<span style="left:705.95px;top:853.00px;font-size:22px;color:#000;letter-spacing:-0.250px;">6.171,33</span>
<span style="left:848.34px;top:853.00px;font-size:22px;color:#000;letter-spacing:-0.100px;">Cartão de crédito</span>
<span style="left:1178.42px;top:853.00px;font-size:22px;color:#000;letter-spacing:-0.260px;">Pago</span>
<div style="left:61px;top:904px;width:1283px;height:1px;background:#000;"></div>
<span style="left:138.30px;top:881.00px;font-size:22px;color:#000;letter-spacing:-0.380px;">9</span>
<span style="left:296.30px;top:881.00px;font-size:22px;color:#000;letter-spacing:-0.380px;">1</span>
<span style="left:427.07px;top:881.00px;font-size:22px;color:#000;letter-spacing:-0.380px;">06/07/2026</span>
<span style="left:594.20px;top:881.00px;font-size:22px;color:#000;letter-spacing:-0.380px;">R$</span>
<span style="left:723.80px;top:881.00px;font-size:22px;color:#000;letter-spacing:-0.250px;">641,22</span>
<span style="left:851.33px;top:881.00px;font-size:22px;color:#000;letter-spacing:-0.100px;">Cartão de débito</span>
<span style="left:1087.43px;top:881.00px;font-size:22px;color:#000;letter-spacing:-0.260px;">Aguardando Pagamento</span>
<div style="left:61px;top:932px;width:1283px;height:1px;background:#000;"></div>
<span style="left:138.30px;top:909.00px;font-size:22px;color:#000;letter-spacing:-0.380px;">9</span>
<span style="left:296.30px;top:909.00px;font-size:22px;color:#000;letter-spacing:-0.380px;">2</span>
<span style="left:427.07px;top:909.00px;font-size:22px;color:#000;letter-spacing:-0.380px;">04/07/2026</span>
<span style="left:594.20px;top:909.00px;font-size:22px;color:#000;letter-spacing:-0.380px;">R$</span>
<span style="left:723.80px;top:909.00px;font-size:22px;color:#000;letter-spacing:-0.250px;">647,39</span>
<span style="left:851.33px;top:909.00px;font-size:22px;color:#000;letter-spacing:-0.100px;">Cartão de débito</span>
<span style="left:1178.42px;top:909.00px;font-size:22px;color:#000;letter-spacing:-0.260px;">Pago</span>
<div style="left:61px;top:960px;width:1283px;height:1px;background:#000;"></div>
<span style="left:132.37px;top:937.00px;font-size:22px;color:#000;letter-spacing:-0.380px;">10</span>
<span style="left:296.30px;top:937.00px;font-size:22px;color:#000;letter-spacing:-0.380px;">1</span>
<span style="left:426.57px;top:937.00px;font-size:22px;color:#000;letter-spacing:-0.380px;">25/08/2025</span>
<span style="left:594.20px;top:937.00px;font-size:22px;color:#000;letter-spacing:-0.380px;">R$</span>
<span style="left:723.80px;top:937.00px;font-size:22px;color:#000;letter-spacing:-0.250px;">461,96</span>
<span style="left:848.34px;top:937.00px;font-size:22px;color:#000;letter-spacing:-0.100px;">Cartão de crédito</span>
<span style="left:1178.42px;top:937.00px;font-size:22px;color:#000;letter-spacing:-0.260px;">Pago</span>
<div style="left:61px;top:988px;width:1283px;height:1px;background:#000;"></div>
<span style="left:132.37px;top:965.00px;font-size:22px;color:#000;letter-spacing:-0.380px;">11</span>
<span style="left:296.30px;top:965.00px;font-size:22px;color:#000;letter-spacing:-0.380px;">1</span>
<span style="left:426.57px;top:965.00px;font-size:22px;color:#000;letter-spacing:-0.380px;">12/08/2026</span>
<span style="left:594.20px;top:965.00px;font-size:22px;color:#000;letter-spacing:-0.380px;">R$</span>
<span style="left:705.95px;top:965.00px;font-size:22px;color:#000;letter-spacing:-0.250px;">3.602,75</span>
<span style="left:916.62px;top:965.00px;font-size:22px;color:#000;letter-spacing:-0.100px;">Pix</span>
<span style="left:1178.42px;top:965.00px;font-size:22px;color:#000;letter-spacing:-0.260px;">Pago</span>
<div style="left:61px;top:1016px;width:1283px;height:1px;background:#000;"></div>
<span style="left:132.37px;top:993.00px;font-size:22px;color:#000;letter-spacing:-0.380px;">11</span>
<span style="left:296.30px;top:993.00px;font-size:22px;color:#000;letter-spacing:-0.380px;">2</span>
<span style="left:426.57px;top:993.00px;font-size:22px;color:#000;letter-spacing:-0.380px;">21/08/2026</span>
<span style="left:594.20px;top:993.00px;font-size:22px;color:#000;letter-spacing:-0.380px;">R$</span>
<span style="left:705.95px;top:993.00px;font-size:22px;color:#000;letter-spacing:-0.250px;">2.738,82</span>
<span style="left:916.62px;top:993.00px;font-size:22px;color:#000;letter-spacing:-0.100px;">Pix</span>
<span style="left:1178.42px;top:993.00px;font-size:22px;color:#000;letter-spacing:-0.260px;">Pago</span>
<div style="left:61px;top:1044px;width:1283px;height:1px;background:#000;"></div>
<span style="left:132.37px;top:1021.00px;font-size:22px;color:#000;letter-spacing:-0.380px;">12</span>
<span style="left:296.30px;top:1021.00px;font-size:22px;color:#000;letter-spacing:-0.380px;">1</span>
<span style="left:427.07px;top:1021.00px;font-size:22px;color:#000;letter-spacing:-0.380px;">03/03/2026</span>
<span style="left:594.20px;top:1021.00px;font-size:22px;color:#000;letter-spacing:-0.380px;">R$</span>
<span style="left:705.95px;top:1021.00px;font-size:22px;color:#000;letter-spacing:-0.250px;">3.862,24</span>
<span style="left:848.34px;top:1021.00px;font-size:22px;color:#000;letter-spacing:-0.100px;">Cartão de crédito</span>
<span style="left:1178.42px;top:1021.00px;font-size:22px;color:#000;letter-spacing:-0.260px;">Pago</span>
<div style="left:61px;top:1072px;width:1283px;height:1px;background:#000;"></div>
<span style="left:132.37px;top:1049.00px;font-size:22px;color:#000;letter-spacing:-0.380px;">13</span>
<span style="left:296.30px;top:1049.00px;font-size:22px;color:#000;letter-spacing:-0.380px;">1</span>
<span style="left:426.57px;top:1049.00px;font-size:22px;color:#000;letter-spacing:-0.380px;">18/02/2025</span>
<span style="left:594.20px;top:1049.00px;font-size:22px;color:#000;letter-spacing:-0.380px;">R$</span>
<span style="left:723.80px;top:1049.00px;font-size:22px;color:#000;letter-spacing:-0.250px;">273,23</span>
<span style="left:848.34px;top:1049.00px;font-size:22px;color:#000;letter-spacing:-0.100px;">Cartão de crédito</span>
<span style="left:1178.42px;top:1049.00px;font-size:22px;color:#000;letter-spacing:-0.260px;">Pago</span>
<div style="left:61px;top:1100px;width:1283px;height:1px;background:#000;"></div>
<span style="left:132.37px;top:1077.00px;font-size:22px;color:#000;letter-spacing:-0.380px;">13</span>
<span style="left:296.30px;top:1077.00px;font-size:22px;color:#000;letter-spacing:-0.380px;">2</span>
<span style="left:426.57px;top:1077.00px;font-size:22px;color:#000;letter-spacing:-0.380px;">19/02/2025</span>
<span style="left:594.20px;top:1077.00px;font-size:22px;color:#000;letter-spacing:-0.380px;">R$</span>
<span style="left:735.78px;top:1077.00px;font-size:22px;color:#000;letter-spacing:-0.250px;">43,37</span>
<span style="left:848.34px;top:1077.00px;font-size:22px;color:#000;letter-spacing:-0.100px;">Cartão de crédito</span>
<span style="left:1178.42px;top:1077.00px;font-size:22px;color:#000;letter-spacing:-0.260px;">Pago</span>
<div style="left:61px;top:1128px;width:1283px;height:1px;background:#000;"></div>
<span style="left:132.37px;top:1105.00px;font-size:22px;color:#000;letter-spacing:-0.380px;">14</span>
<span style="left:296.30px;top:1105.00px;font-size:22px;color:#000;letter-spacing:-0.380px;">1</span>
<span style="left:426.57px;top:1105.00px;font-size:22px;color:#000;letter-spacing:-0.380px;">28/02/2025</span>
<span style="left:594.20px;top:1105.00px;font-size:22px;color:#000;letter-spacing:-0.380px;">R$</span>
<span style="left:705.95px;top:1105.00px;font-size:22px;color:#000;letter-spacing:-0.250px;">1.797,81</span>
<span style="left:851.33px;top:1105.00px;font-size:22px;color:#000;letter-spacing:-0.100px;">Cartão de débito</span>
<span style="left:1178.42px;top:1105.00px;font-size:22px;color:#000;letter-spacing:-0.260px;">Pago</span>
<div style="left:61px;top:1156px;width:1283px;height:1px;background:#000;"></div>
<span style="left:132.37px;top:1133.00px;font-size:22px;color:#000;letter-spacing:-0.380px;">14</span>
<span style="left:296.30px;top:1133.00px;font-size:22px;color:#000;letter-spacing:-0.380px;">2</span>
<span style="left:427.07px;top:1133.00px;font-size:22px;color:#000;letter-spacing:-0.380px;">07/02/2025</span>
<span style="left:594.20px;top:1133.00px;font-size:22px;color:#000;letter-spacing:-0.380px;">R$</span>
<span style="left:705.95px;top:1133.00px;font-size:22px;color:#000;letter-spacing:-0.250px;">2.374,14</span>
<span style="left:851.33px;top:1133.00px;font-size:22px;color:#000;letter-spacing:-0.100px;">Cartão de débito</span>
<span style="left:1178.42px;top:1133.00px;font-size:22px;color:#000;letter-spacing:-0.260px;">Pago</span>
<div style="left:61px;top:1184px;width:1283px;height:1px;background:#000;"></div>
<span style="left:132.37px;top:1161.00px;font-size:22px;color:#000;letter-spacing:-0.380px;">15</span>
<span style="left:296.30px;top:1161.00px;font-size:22px;color:#000;letter-spacing:-0.380px;">1</span>
<span style="left:427.07px;top:1161.00px;font-size:22px;color:#000;letter-spacing:-0.380px;">05/08/2026</span>
<span style="left:594.20px;top:1161.00px;font-size:22px;color:#000;letter-spacing:-0.380px;">R$</span>
<span style="left:723.80px;top:1161.00px;font-size:22px;color:#000;letter-spacing:-0.250px;">776,05</span>
<span style="left:848.34px;top:1161.00px;font-size:22px;color:#000;letter-spacing:-0.100px;">Cartão de crédito</span>
<span style="left:1178.42px;top:1161.00px;font-size:22px;color:#000;letter-spacing:-0.260px;">Pago</span>
<div style="left:61px;top:1212px;width:1283px;height:1px;background:#000;"></div>
<span style="left:132.37px;top:1189.00px;font-size:22px;color:#000;letter-spacing:-0.380px;">15</span>
<span style="left:296.30px;top:1189.00px;font-size:22px;color:#000;letter-spacing:-0.380px;">2</span>
<span style="left:426.57px;top:1189.00px;font-size:22px;color:#000;letter-spacing:-0.380px;">19/08/2026</span>
<span style="left:594.20px;top:1189.00px;font-size:22px;color:#000;letter-spacing:-0.380px;">R$</span>
<span style="left:705.95px;top:1189.00px;font-size:22px;color:#000;letter-spacing:-0.250px;">1.960,00</span>
<span style="left:848.34px;top:1189.00px;font-size:22px;color:#000;letter-spacing:-0.100px;">Cartão de crédito</span>
<span style="left:1087.43px;top:1189.00px;font-size:22px;color:#000;letter-spacing:-0.260px;">Aguardando Pagamento</span>
<div style="left:61px;top:1240px;width:1283px;height:1px;background:#000;"></div>
<span style="left:132.37px;top:1217.00px;font-size:22px;color:#000;letter-spacing:-0.380px;">16</span>
<span style="left:296.30px;top:1217.00px;font-size:22px;color:#000;letter-spacing:-0.380px;">1</span>
<span style="left:426.57px;top:1217.00px;font-size:22px;color:#000;letter-spacing:-0.380px;">13/03/2025</span>
<span style="left:594.20px;top:1217.00px;font-size:22px;color:#000;letter-spacing:-0.380px;">R$</span>
<span style="left:705.95px;top:1217.00px;font-size:22px;color:#000;letter-spacing:-0.250px;">4.195,31</span>
<span style="left:851.33px;top:1217.00px;font-size:22px;color:#000;letter-spacing:-0.100px;">Cartão de débito</span>
<span style="left:1178.42px;top:1217.00px;font-size:22px;color:#000;letter-spacing:-0.260px;">Pago</span>
<div style="left:61px;top:1268px;width:1283px;height:1px;background:#000;"></div>
<span style="left:132.37px;top:1245.00px;font-size:22px;color:#000;letter-spacing:-0.380px;">17</span>
<span style="left:296.30px;top:1245.00px;font-size:22px;color:#000;letter-spacing:-0.380px;">1</span>
<span style="left:426.57px;top:1245.00px;font-size:22px;color:#000;letter-spacing:-0.380px;">10/04/2025</span>
<span style="left:594.20px;top:1245.00px;font-size:22px;color:#000;letter-spacing:-0.380px;">R$</span>
<span style="left:723.80px;top:1245.00px;font-size:22px;color:#000;letter-spacing:-0.250px;">530,00</span>
<span style="left:916.62px;top:1245.00px;font-size:22px;color:#000;letter-spacing:-0.100px;">Pix</span>
<span style="left:1178.42px;top:1245.00px;font-size:22px;color:#000;letter-spacing:-0.260px;">Pago</span>
<div style="left:61px;top:1296px;width:1283px;height:1px;background:#000;"></div>
<span style="left:132.37px;top:1273.00px;font-size:22px;color:#000;letter-spacing:-0.380px;">17</span>
<span style="left:296.30px;top:1273.00px;font-size:22px;color:#000;letter-spacing:-0.380px;">2</span>
<span style="left:426.57px;top:1273.00px;font-size:22px;color:#000;letter-spacing:-0.380px;">16/04/2025</span>
<span style="left:594.20px;top:1273.00px;font-size:22px;color:#000;letter-spacing:-0.380px;">R$</span>
<span style="left:723.80px;top:1273.00px;font-size:22px;color:#000;letter-spacing:-0.250px;">658,80</span>
<span style="left:916.62px;top:1273.00px;font-size:22px;color:#000;letter-spacing:-0.100px;">Pix</span>
<span style="left:1087.43px;top:1273.00px;font-size:22px;color:#000;letter-spacing:-0.260px;">Aguardando Pagamento</span>
<div style="left:61px;top:1324px;width:1283px;height:1px;background:#000;"></div>
<span style="left:132.37px;top:1301.00px;font-size:22px;color:#000;letter-spacing:-0.380px;">18</span>
<span style="left:296.30px;top:1301.00px;font-size:22px;color:#000;letter-spacing:-0.380px;">1</span>
<span style="left:426.57px;top:1301.00px;font-size:22px;color:#000;letter-spacing:-0.380px;">12/01/2025</span>
<span style="left:594.20px;top:1301.00px;font-size:22px;color:#000;letter-spacing:-0.380px;">R$</span>
<span style="left:723.80px;top:1301.00px;font-size:22px;color:#000;letter-spacing:-0.250px;">251,91</span>
<span style="left:916.62px;top:1301.00px;font-size:22px;color:#000;letter-spacing:-0.100px;">Pix</span>
<span style="left:1178.42px;top:1301.00px;font-size:22px;color:#000;letter-spacing:-0.260px;">Pago</span>
<div style="left:61px;top:1352px;width:1283px;height:1px;background:#000;"></div>
<span style="left:132.37px;top:1329.00px;font-size:22px;color:#000;letter-spacing:-0.380px;">18</span>
<span style="left:296.30px;top:1329.00px;font-size:22px;color:#000;letter-spacing:-0.380px;">2</span>
<span style="left:427.07px;top:1329.00px;font-size:22px;color:#000;letter-spacing:-0.380px;">03/01/2025</span>
<span style="left:594.20px;top:1329.00px;font-size:22px;color:#000;letter-spacing:-0.380px;">R$</span>
<span style="left:705.95px;top:1329.00px;font-size:22px;color:#000;letter-spacing:-0.250px;">4.953,86</span>
<span style="left:916.62px;top:1329.00px;font-size:22px;color:#000;letter-spacing:-0.100px;">Pix</span>
<span style="left:1178.42px;top:1329.00px;font-size:22px;color:#000;letter-spacing:-0.260px;">Pago</span>
<div style="left:61px;top:1380px;width:1283px;height:1px;background:#000;"></div>
<span style="left:132.37px;top:1357.00px;font-size:22px;color:#000;letter-spacing:-0.380px;">19</span>
<span style="left:296.30px;top:1357.00px;font-size:22px;color:#000;letter-spacing:-0.380px;">1</span>
<span style="left:426.57px;top:1357.00px;font-size:22px;color:#000;letter-spacing:-0.380px;">13/02/2025</span>
<span style="left:594.20px;top:1357.00px;font-size:22px;color:#000;letter-spacing:-0.380px;">R$</span>
<span style="left:705.95px;top:1357.00px;font-size:22px;color:#000;letter-spacing:-0.250px;">5.551,91</span>
<span style="left:848.34px;top:1357.00px;font-size:22px;color:#000;letter-spacing:-0.100px;">Cartão de crédito</span>
<span style="left:1178.42px;top:1357.00px;font-size:22px;color:#000;letter-spacing:-0.260px;">Pago</span>
<div style="left:61px;top:1408px;width:1283px;height:1px;background:#000;"></div>
<span style="left:132.37px;top:1385.00px;font-size:22px;color:#000;letter-spacing:-0.380px;">20</span>
<span style="left:296.30px;top:1385.00px;font-size:22px;color:#000;letter-spacing:-0.380px;">1</span>
<span style="left:427.07px;top:1385.00px;font-size:22px;color:#000;letter-spacing:-0.380px;">08/12/2025</span>
<span style="left:594.20px;top:1385.00px;font-size:22px;color:#000;letter-spacing:-0.380px;">R$</span>
<span style="left:705.95px;top:1385.00px;font-size:22px;color:#000;letter-spacing:-0.250px;">3.470,19</span>
<span style="left:916.62px;top:1385.00px;font-size:22px;color:#000;letter-spacing:-0.100px;">Pix</span>
<span style="left:1178.42px;top:1385.00px;font-size:22px;color:#000;letter-spacing:-0.260px;">Pago</span>
<div style="left:61px;top:1436px;width:1283px;height:1px;background:#000;"></div>
<span style="left:132.37px;top:1413.00px;font-size:22px;color:#000;letter-spacing:-0.380px;">21</span>
<span style="left:296.30px;top:1413.00px;font-size:22px;color:#000;letter-spacing:-0.380px;">1</span>
<span style="left:426.57px;top:1413.00px;font-size:22px;color:#000;letter-spacing:-0.380px;">28/10/2026</span>
<span style="left:594.20px;top:1413.00px;font-size:22px;color:#000;letter-spacing:-0.380px;">R$</span>
<span style="left:705.95px;top:1413.00px;font-size:22px;color:#000;letter-spacing:-0.250px;">1.051,50</span>
<span style="left:851.33px;top:1413.00px;font-size:22px;color:#000;letter-spacing:-0.100px;">Cartão de débito</span>
<span style="left:1087.43px;top:1413.00px;font-size:22px;color:#000;letter-spacing:-0.260px;">Aguardando Pagamento</span>
<div style="left:61px;top:1464px;width:1283px;height:1px;background:#000;"></div>
<span style="left:132.37px;top:1441.00px;font-size:22px;color:#000;letter-spacing:-0.380px;">21</span>
<span style="left:296.30px;top:1441.00px;font-size:22px;color:#000;letter-spacing:-0.380px;">2</span>
<span style="left:426.57px;top:1441.00px;font-size:22px;color:#000;letter-spacing:-0.380px;">10/11/2026</span>
<span style="left:594.20px;top:1441.00px;font-size:22px;color:#000;letter-spacing:-0.380px;">R$</span>
<span style="left:705.95px;top:1441.00px;font-size:22px;color:#000;letter-spacing:-0.250px;">1.191,32</span>
<span style="left:851.33px;top:1441.00px;font-size:22px;color:#000;letter-spacing:-0.100px;">Cartão de débito</span>
<span style="left:1178.42px;top:1441.00px;font-size:22px;color:#000;letter-spacing:-0.260px;">Pago</span>
<div style="left:226px;top:483px;width:153px;height:31px;border:2px solid #1e6e42;box-sizing:border-box;"></div>
<div style="left:373px;top:508px;width:7px;height:7px;background:#fff;"></div>
<div style="left:374px;top:509px;width:6px;height:6px;background:#1e6e42;"></div>
<div style="left:382px;top:484.6px;width:38px;height:38.6px;background:#fff;border:2px solid #5c5c5c;border-radius:7.5px;box-sizing:border-box;box-shadow:0 3px 7px rgba(0,0,0,.20);"></div>
<div style="left:0px;top:1446.5px;width:2560px;height:48.5px;background:linear-gradient(90deg,#ece9e8 0%,#e9e8e8 35%,#e4e8eb 70%,#e3e8ec 100%);"></div>
<div style="left:2532px;top:1420px;width:26px;height:28.7px;background:#f5f5f5;border-radius:0 0 13px 13px;"></div>
<div style="left:466.4px;top:1447px;width:146.8px;height:41.6px;background:#fff;border-radius:0 0 9px 9px;box-shadow:0 1px 2px rgba(0,0,0,.12);"></div>
<div style="left:479.7px;top:1481.9px;width:121.3px;height:3.2px;background:#107c41;border-radius:1px;"></div>
<div style="left:293.0px;top:1456.4px;width:1px;height:28px;background:#cfcfcf;"></div>
<div style="left:459.9px;top:1456.4px;width:1px;height:28px;background:#cfcfcf;"></div>
<div style="left:618.7px;top:1456.4px;width:1px;height:28px;background:#cfcfcf;"></div>
<div style="left:707.2px;top:1456.4px;width:1px;height:28px;background:#cfcfcf;"></div>
<span style="left:180.00px;top:1462.30px;font-size:20px;color:#3b3b3b;letter-spacing:0.031px;">Cadastros</span>
<span style="left:314.60px;top:1462.30px;font-size:20px;color:#3b3b3b;letter-spacing:0.599px;">Hospedagem</span>
<span style="left:478.90px;top:1458.80px;font-size:19.6px;color:#1f1f1f;font-weight:700;letter-spacing:0.587px;">Pagamentos</span>
<span style="left:639.00px;top:1462.30px;font-size:20px;color:#3b3b3b;letter-spacing:0.687px;">Meta</span>
<div style="left:1564.8px;top:1457px;width:963.7px;height:25.8px;background:#f5f5f5;border-radius:13px;"></div>
<div style="left:1590.8px;top:1464px;width:879.3px;height:12px;background:#707070;border-radius:6px;"></div>
<div style="left:0px;top:1495px;width:2560px;height:33px;background:#f5f5f5;"></div>
<div style="left:2113.8px;top:1495px;width:59.6px;height:33px;background:#dfdfdf;"></div>
<span style="left:15.60px;top:1504.80px;font-size:15px;color:#3b3b3b;letter-spacing:0.710px;">Pronto</span>
<span style="left:119.40px;top:1504.80px;font-size:15px;color:#222;font-weight:700;letter-spacing:0.323px;">Acessibilidade: investigar</span>
<span style="left:1943.60px;top:1504.60px;font-size:15px;color:#3b3b3b;letter-spacing:0.195px;">Exibir Configurações</span>
<span style="left:2508.60px;top:1504.60px;font-size:15px;color:#3b3b3b;letter-spacing:0.391px;">100%</span>
<span style="left:71.60px;top:29.10px;font-size:15px;color:#333;letter-spacing:0.366px;">Salvamento Automático</span>
<span style="left:541.64px;top:29.10px;font-size:17.6px;color:#242424;transform:scaleX(0.9644);transform-origin:0 0;">Base hotel Preenchida 1.3.xlsx</span>
<span style="left:782.90px;top:31.10px;font-size:14px;color:#242424;transform:scaleX(1.0200);transform-origin:0 0;">•</span>
<span style="left:797.30px;top:29.10px;font-size:17.6px;color:#242424;transform:scaleX(0.9469);transform-origin:0 0;">Salvo neste PC</span>
<span style="left:1078.00px;top:30.20px;font-size:17.8px;color:#5a5a5a;letter-spacing:0.232px;">Pesquisar</span>
<span style="left:11.30px;top:86.70px;font-size:19.3px;color:#2b2b2b;letter-spacing:0.675px;">Arquivo</span>
<span style="left:247.01px;top:86.70px;font-size:19.3px;color:#2b2b2b;transform:scaleX(0.9897);transform-origin:0 0;">Inserir</span>
<span style="left:333.85px;top:86.70px;font-size:19.3px;color:#2b2b2b;transform:scaleX(0.9521);transform-origin:0 0;">Desenhar</span>
<span style="left:447.71px;top:86.70px;font-size:19.3px;color:#2b2b2b;transform:scaleX(0.9902);transform-origin:0 0;">Layout da Página</span>
<span style="left:629.40px;top:86.70px;font-size:19.3px;color:#2b2b2b;letter-spacing:0.127px;">Fórmulas</span>
<span style="left:739.90px;top:86.70px;font-size:19.3px;color:#2b2b2b;letter-spacing:0.226px;">Dados</span>
<span style="left:824.54px;top:86.70px;font-size:19.3px;color:#2b2b2b;transform:scaleX(0.9553);transform-origin:0 0;">Revisão</span>
<span style="left:920.31px;top:86.70px;font-size:19.3px;color:#2b2b2b;transform:scaleX(0.9897);transform-origin:0 0;">Exibir</span>
<span style="left:998.50px;top:86.70px;font-size:19.3px;color:#2b2b2b;letter-spacing:0.405px;">Automatizar</span>
<span style="left:1136.50px;top:86.70px;font-size:19.3px;color:#2b2b2b;letter-spacing:0.152px;">Ajuda</span>
<span style="left:1215.60px;top:86.70px;font-size:19.3px;color:#2b2b2b;letter-spacing:0.301px;">Acrobat</span>
<span style="left:99.50px;top:86.70px;font-size:19.3px;color:#1a1a1a;letter-spacing:0.353px;-webkit-text-stroke:0.55px #1a1a1a;">Página Inicial</span>
<span style="left:1316.63px;top:86.70px;font-size:19.3px;color:#0f7b41;transform:scaleX(0.9733);transform-origin:0 0;">Design da Tabela</span>
<span style="left:2188.40px;top:85.90px;font-size:19.3px;color:#242424;letter-spacing:0.194px;">Comentários</span>
<span style="left:2352.60px;top:85.90px;font-size:19.3px;color:#fff;letter-spacing:0.466px;">Compartilhamento</span>
<span style="left:51.30px;top:184.00px;font-size:18px;color:#242424;transform:scaleX(0.9461);transform-origin:0 0;">Colar</span>
<span style="left:215.30px;top:144.30px;font-size:18px;color:#242424;transform:scaleX(0.9626);transform-origin:0 0;">Arial</span>
<span style="left:399.62px;top:144.30px;font-size:18px;color:#242424;letter-spacing:-0.261px;transform:scaleX(0.8800);transform-origin:0 0;">11</span>
<span style="left:814.30px;top:145.00px;font-size:18px;color:#242424;transform:scaleX(0.9823);transform-origin:0 0;">Quebrar Texto Automaticamente</span>
<span style="left:813.65px;top:193.00px;font-size:18px;color:#a8a8a8;transform:scaleX(0.9512);transform-origin:0 0;">Mesclar e Centralizar</span>
<span style="left:1112.40px;top:144.30px;font-size:18px;color:#242424;transform:scaleX(0.9090);transform-origin:0 0;">Geral</span>
<span style="left:1362.93px;top:181.90px;font-size:18px;color:#242424;transform:scaleX(0.9713);transform-origin:0 0;">Formatação</span>
<span style="left:1355.50px;top:205.70px;font-size:18px;color:#242424;transform:scaleX(0.9918);transform-origin:0 0;">Condicional</span>
<span style="left:1475.80px;top:181.90px;font-size:18px;color:#242424;letter-spacing:0.024px;">Formatar como</span>
<span style="left:1504.30px;top:205.70px;font-size:18px;color:#242424;letter-spacing:-0.251px;transform:scaleX(0.8800);transform-origin:0 0;">Tabela</span>
<span style="left:1610.14px;top:181.90px;font-size:18px;color:#242424;transform:scaleX(0.9633);transform-origin:0 0;">Estilos de</span>
<span style="left:1615.80px;top:205.70px;font-size:18px;color:#242424;letter-spacing:-0.040px;transform:scaleX(0.8800);transform-origin:0 0;">Célula</span>
<span style="left:1749.05px;top:133.00px;font-size:18px;color:#242424;transform:scaleX(0.9487);transform-origin:0 0;">Inserir</span>
<span style="left:1749.09px;top:171.70px;font-size:18px;color:#242424;transform:scaleX(0.9054);transform-origin:0 0;">Excluir</span>
<span style="left:1749.02px;top:210.80px;font-size:18px;color:#242424;transform:scaleX(0.9817);transform-origin:0 0;">Formatar</span>
<span style="left:1954.60px;top:181.90px;font-size:18px;color:#242424;transform:scaleX(0.9203);transform-origin:0 0;">Classificar</span>
<span style="left:1955.50px;top:205.70px;font-size:18px;color:#242424;transform:scaleX(0.9425);transform-origin:0 0;">e Filtrar</span>
<span style="left:2050.07px;top:181.90px;font-size:18px;color:#242424;transform:scaleX(0.9322);transform-origin:0 0;">Localizar e</span>
<span style="left:2042.70px;top:205.70px;font-size:18px;color:#242424;transform:scaleX(0.9076);transform-origin:0 0;">Selecionar</span>
<span style="left:2171.30px;top:181.90px;font-size:18px;color:#242424;transform:scaleX(0.9775);transform-origin:0 0;">Suplementos</span>
<span style="left:2307.30px;top:183.30px;font-size:18px;color:#242424;letter-spacing:0.312px;">Copilot</span>
<span style="left:2406.40px;top:181.40px;font-size:18px;color:#242424;transform:scaleX(0.9498);transform-origin:0 0;">Crie um</span>
<span style="left:2420.42px;top:205.50px;font-size:18px;color:#242424;letter-spacing:-0.514px;transform:scaleX(0.8800);transform-origin:0 0;">PDF</span>
<span style="left:21.50px;top:243.80px;font-size:15.6px;color:#444;transform:scaleX(0.9572);transform-origin:0 0;">Área de Transferência</span>
<span style="left:342.71px;top:243.80px;font-size:15.6px;color:#444;transform:scaleX(0.9947);transform-origin:0 0;">Fonte</span>
<span style="left:766.50px;top:243.80px;font-size:15.6px;color:#444;letter-spacing:0.139px;">Alinhamento</span>
<span style="left:1175.80px;top:243.80px;font-size:15.6px;color:#444;letter-spacing:0.482px;">Número</span>
<span style="left:1496.86px;top:244.70px;font-size:15.6px;color:#444;transform:scaleX(0.9395);transform-origin:0 0;">Estilos</span>
<span style="left:1756.40px;top:244.70px;font-size:15.6px;color:#444;transform:scaleX(0.9347);transform-origin:0 0;">Células</span>
<span style="left:1985.96px;top:244.70px;font-size:15.6px;color:#444;transform:scaleX(0.9382);transform-origin:0 0;">Edição</span>
<span style="left:2176.30px;top:244.70px;font-size:15.6px;color:#444;transform:scaleX(0.9833);transform-origin:0 0;">Suplementos</span>
<span style="left:2384.50px;top:243.80px;font-size:15.6px;color:#444;transform:scaleX(0.9872);transform-origin:0 0;">Adobe Acrobat</span>
<span style="left:220.82px;top:190.40px;font-size:19.5px;color:#333;font-weight:700;transform:scaleX(1.1833);transform-origin:0 0;-webkit-text-stroke:0.5px #333;">N</span>
<span class="s" style="left:265.44px;top:189.40px;font-size:21px;color:#333;font-style:italic;transform:scaleX(1.0444);transform-origin:0 0;">I</span>
<span style="left:302.50px;top:190.20px;font-size:19.5px;color:#333;transform:scaleX(0.8462);transform-origin:0 0;">S</span>
<span style="left:471.40px;top:138.50px;font-size:26px;color:#444;transform:scaleX(0.9500);transform-origin:0 0;">A</span>
<span style="left:513.40px;top:143.50px;font-size:21.5px;color:#444;transform:scaleX(0.9400);transform-origin:0 0;">A</span>
<span style="left:492.40px;top:188.50px;font-size:20.5px;color:#444;transform:scaleX(0.9714);transform-origin:0 0;">A</span>
<span style="left:1175.90px;top:186.60px;font-size:30px;color:#444;transform:scaleX(0.8960);transform-origin:0 0;">%</span>
<span style="left:1215.00px;top:193.60px;font-size:14.5px;color:#444;transform:scaleX(0.9532);transform-origin:0 0;">000</span>
<span style="left:18.61px;top:286.80px;font-size:20px;color:#242424;transform:scaleX(0.9860);transform-origin:0 0;">C4</span>
<span style="left:345.60px;top:286.80px;font-size:20px;color:#242424;">1</span>
<svg width="2560" height="1528" viewBox="0 0 2560 1528">
<polygon points="35.4,329.5 35.4,348.5 15.5,348.5" fill="#d9d9d9"/>
<polyline points="43.2,1463 35.8,1469.7 43.2,1476.4" fill="none" stroke="#8f8f8f" stroke-width="1.7"/>
<polyline points="85,1463 92.4,1469.7 85,1476.4" fill="none" stroke="#8f8f8f" stroke-width="1.7"/>
<line x1="771" y1="1470.4" x2="787.3" y2="1470.4" stroke="#444" stroke-width="1.5" stroke-linecap="butt"/>
<line x1="779.1" y1="1462.3" x2="779.1" y2="1478.6" stroke="#444" stroke-width="1.5" stroke-linecap="butt"/>
<rect x="1539.3" y="1464.9" width="2.6" height="2.6" fill="#444"/>
<rect x="1539.3" y="1470.5" width="2.6" height="2.6" fill="#444"/>
<rect x="1539.3" y="1476.1000000000001" width="2.6" height="2.6" fill="#444"/>
<polygon points="1583,1463.6 1583,1476.4 1573.3,1470" fill="#6a6a6a" stroke="#6a6a6a" stroke-width="1" stroke-linejoin="round"/>
<polygon points="2511,1463.6 2511,1476.4 2520.8,1470" fill="#6a6a6a" stroke="#6a6a6a" stroke-width="1" stroke-linejoin="round"/>
<polygon points="2537.8,1432 2552,1432 2544.9,1441" fill="#6a6a6a" stroke="#6a6a6a" stroke-width="1" stroke-linejoin="round"/>
<polygon points="2539,341.5 2551.5,341.5 2545.2,333" fill="#6a6a6a" stroke="#6a6a6a" stroke-width="1.2" stroke-linejoin="round"/>
<line x1="2302" y1="1512" x2="2313" y2="1512" stroke="#444" stroke-width="1.4" stroke-linecap="butt"/>
<line x1="2321.8" y1="1512" x2="2470" y2="1512" stroke="#5a5a5a" stroke-width="1.8" stroke-linecap="butt"/>
<rect x="2392" y="1503" width="8" height="17" rx="0" fill="#606060" stroke="none" stroke-width="1.5" />
<line x1="2478" y1="1512" x2="2489" y2="1512" stroke="#444" stroke-width="1.4" stroke-linecap="butt"/>
<line x1="2483.5" y1="1506.5" x2="2483.5" y2="1517.5" stroke="#444" stroke-width="1.4" stroke-linecap="butt"/>
<rect x="2134.5" y="1503.0" width="18" height="17.2" rx="0" fill="none" stroke="#333" stroke-width="1.4" />
<line x1="2140.5" y1="1503.0" x2="2140.5" y2="1520.2" stroke="#333" stroke-width="1.3" stroke-linecap="butt"/>
<line x1="2134.5" y1="1508.73" x2="2152.5" y2="1508.73" stroke="#333" stroke-width="1.3" stroke-linecap="butt"/>
<line x1="2146.5" y1="1503.0" x2="2146.5" y2="1520.2" stroke="#333" stroke-width="1.3" stroke-linecap="butt"/>
<line x1="2134.5" y1="1514.46" x2="2152.5" y2="1514.46" stroke="#333" stroke-width="1.3" stroke-linecap="butt"/>
<rect x="2194.2" y="1503.0" width="20" height="17.2" rx="0" fill="none" stroke="#333" stroke-width="1.4" />
<rect x="2198.9" y="1506.5" width="10.6" height="10.2" rx="0" fill="none" stroke="#333" stroke-width="1.3" />
<line x1="2201.0" y1="1509.6" x2="2207.5" y2="1509.6" stroke="#333" stroke-width="1.1" stroke-linecap="butt"/>
<line x1="2201.0" y1="1511.8999999999999" x2="2207.5" y2="1511.8999999999999" stroke="#333" stroke-width="1.1" stroke-linecap="butt"/>
<line x1="2201.0" y1="1514.2" x2="2207.5" y2="1514.2" stroke="#333" stroke-width="1.1" stroke-linecap="butt"/>
<rect x="2253.7" y="1503.0" width="20" height="17.2" rx="0" fill="none" stroke="#333" stroke-width="1.4" />
<path d="M2259.5 1503.0 V1512.8 H2266.5 V1503.0" fill="none" stroke="#333" stroke-width="1.3" />
<path d="M1929.7 1516.5 H1918.5 V1503.8 H1937.7 V1509" fill="none" stroke="#333" stroke-width="1.4" />
<line x1="1921.7" y1="1520.5" x2="1927.7" y2="1520.5" stroke="#333" stroke-width="1.4" stroke-linecap="butt"/>
<circle cx="1934.0" cy="1517" r="3.6" fill="none" stroke="#333" stroke-width="2.6" stroke-dasharray="2 1.7"/><circle cx="1934.0" cy="1517" r="1.6" fill="none" stroke="#333" stroke-width="1.1"/>
<circle cx="101.3" cy="1505" r="2.5" fill="none" stroke="#222" stroke-width="1.4"/>
<path d="M93.4 1506.2 Q92.6 1508 94.4 1508.8 L98.6 1510.4 V1513 L95.6 1520.6 Q95.4 1522.4 97 1522.4 Q98.2 1522.4 98.8 1520.8 L101 1515.4 L102.4 1517.2 M109.2 1506.2 Q110 1508 108.2 1508.8 L104 1510.4 V1512.6 L105.2 1514.6 M93.6 1506.2 Q94.6 1505.4 95.8 1506 L99.4 1507.8 H103.2 L106.8 1506 Q108 1505.4 109 1506.2" fill="none" stroke="#222" stroke-width="1.3" stroke-linecap="round" stroke-linejoin="round"/>
<path d="M104.6 1515 L112.6 1522.4 M112.6 1515 L104.6 1522.4" fill="none" stroke="#222" stroke-width="1.5" />
<path d="M461.9 1446.6 H466.5 V1451.5 Q466.5 1446.9 461.9 1446.6 Z" fill="#fff"/>
<path d="M617.8 1446.6 H613.1 V1451.5 Q613.1 1446.9 617.8 1446.6 Z" fill="#fff"/>
<path d="M29 24.1 H36.2 V32 H26.9 V26.2 Q26.9 24.1 29 24.1 Z" fill="#6cc45c"/><path d="M36.1 24.1 H45 Q46.7 24.1 46.7 25.8 V32.6 H36.1 Z" fill="#b8e66e"/>
<path d="M26.9 31.3 H36.1 V32.4 H46.7 V46 Q46.7 48 44.7 48 H29.4 Q26.9 48 26.9 45.6 Z" fill="#1c622e"/>
<rect x="24" y="31.3" width="13" height="14" rx="2" fill="#175c2e"/>
<path d="M27.9 34.6 L33.6 41.8 M33.6 34.6 L27.9 41.8" stroke="#fff" stroke-width="2.1" fill="none"/>
<path d="M329.9 24.9 H352.2 V47 H333.4 L329.9 43.6 Z" fill="#d89ae0" stroke="#9a28a8" stroke-width="1.6"/>
<rect x="334.6" y="25.2" width="12.8" height="8.2" fill="#fff" stroke="#9a28a8" stroke-width="1.2"/><rect x="336.4" y="40.4" width="9.4" height="6" fill="#fff" stroke="#9a28a8" stroke-width="1.2"/>
<path d="M373.6 24 V33.9 H383.9" fill="none" stroke="#9b9b9b" stroke-width="1.6" />
<path d="M373.9 33.6 L381.9 25.8 Q386.3 22.4 391 26.2 Q396.6 31.6 391.4 38 L381.5 47.4" fill="none" stroke="#9b9b9b" stroke-width="1.6" />
<path d="M451.1 24 V33.9 H440.8" fill="none" stroke="#9b9b9b" stroke-width="1.6" />
<path d="M450.8 33.6 L442.8 25.8 Q438.4 22.4 433.7 26.2 Q428.1 31.6 433.3 38 L443.2 47.4" fill="none" stroke="#9b9b9b" stroke-width="1.6" />
<polyline points="404.30,33.60 408.20,37.40 412.10,33.60" fill="none" stroke="#b5b5b5" stroke-width="1.6" stroke-linejoin="miter"/>
<polyline points="461.40,33.60 465.30,37.40 469.20,33.60" fill="none" stroke="#b5b5b5" stroke-width="1.6" stroke-linejoin="miter"/>
<line x1="492.9" y1="33.1" x2="503.8" y2="33.1" stroke="#1a1a1a" stroke-width="1.9" stroke-linecap="butt"/>
<polyline points="494.50,36.90 498.30,40.30 502.10,36.90" fill="none" stroke="#1a1a1a" stroke-width="1.8" stroke-linejoin="miter"/>
<polyline points="919.15,33.50 926.40,40.90 933.65,33.50" fill="none" stroke="#222" stroke-width="1.5" stroke-linejoin="miter"/>
<circle cx="1049.8" cy="33" r="6.9" fill="none" stroke="#555" stroke-width="1.5"/>
<line x1="1044.8" y1="38.2" x2="1036.2" y2="46.8" stroke="#555" stroke-width="1.5" stroke-linecap="butt"/>
<line x1="2372" y1="35.4" x2="2387.6" y2="35.4" stroke="#222" stroke-width="1.7" stroke-linecap="butt"/>
<rect x="2445" y="32.6" width="10.6" height="10.8" rx="2.4" fill="none" stroke="#222" stroke-width="1.7"/>
<path d="M2448 29.6 H2455.4 Q2458.8 29.6 2458.8 33 V40.2" fill="none" stroke="#222" stroke-width="1.7" />
<path d="M2516.6 28.8 L2531.2 43.4 M2531.2 28.8 L2516.6 43.4" fill="none" stroke="#222" stroke-width="1.7" />
<path d="M2166 87.3 H2181 V98 H2171.5 L2168.2 101.2 V98 H2166 Z" fill="none" stroke="#333" stroke-width="1.4" stroke-linejoin="round"/>
<path d="M2335 91.5 H2329 V102.3 H2342 V98.5" fill="none" stroke="#fff" stroke-width="1.5" />
<path d="M2333 98 C2333.3 93 2336 91.2 2339.5 91 V87.3 L2344.5 92.5 L2339.5 97.5 V94 C2337 94 2334.8 95 2333 98 Z" fill="none" stroke="#fff" stroke-width="1.3" stroke-linejoin="round"/>
<polyline points="2527.80,92.65 2531.60,96.35 2535.40,92.65" fill="none" stroke="#fff" stroke-width="1.6" stroke-linejoin="miter"/>
<rect x="56.2" y="137" width="30" height="33.8" fill="#fce4b6" stroke="#e8730c" stroke-width="1.6"/>
<rect x="60.3" y="141" width="22" height="26" fill="#fbfbfb"/>
<path d="M62 140.6 V134.6 H66.5 Q66.8 130.6 71.2 130.6 Q75.6 130.6 75.9 134.6 H80.4 V140.6 Z" fill="#fafafa" stroke="#777" stroke-width="1.5"/>
<rect x="75.8" y="148.8" width="19.4" height="25.4" fill="#fafafa" stroke="#444" stroke-width="1.5"/>
<polyline points="67.40,213.95 71.20,217.65 75.00,213.95" fill="none" stroke="#262626" stroke-width="1.6" stroke-linejoin="miter"/>
<line x1="119.6" y1="129.6" x2="128.2" y2="147" stroke="#444" stroke-width="1.3" stroke-linecap="butt"/>
<line x1="128.4" y1="129.6" x2="119.8" y2="147" stroke="#444" stroke-width="1.3" stroke-linecap="butt"/>
<circle cx="119.6" cy="149.9" r="2.5" fill="none" stroke="#1e8bcd" stroke-width="1.6"/><circle cx="128.4" cy="149.9" r="2.5" fill="none" stroke="#1e8bcd" stroke-width="1.6"/>
<path d="M121.5 187.6 H112.4 V168.7 H119.5 L122.5 171.5" fill="none" stroke="#444" stroke-width="1.5" />
<path d="M121.8 174.4 H130.5 L135.3 179.2 V191.3 H121.8 Z" fill="#fff" stroke="#444" stroke-width="1.5"/>
<path d="M130.3 174.6 V179.4 H135.2" fill="none" stroke="#444" stroke-width="1.3" />
<line x1="125" y1="183.5" x2="132.4" y2="183.5" stroke="#444" stroke-width="1.2" stroke-linecap="butt"/>
<line x1="125" y1="186.6" x2="132.4" y2="186.6" stroke="#444" stroke-width="1.2" stroke-linecap="butt"/>
<polyline points="155.40,178.65 159.20,182.35 163.00,178.65" fill="none" stroke="#262626" stroke-width="1.6" stroke-linejoin="miter"/>
<path d="M112.6 217.2 L121.5 213.6 L129.8 222 L122.5 228.6 Z" fill="#fde3b5" stroke="#e8730c" stroke-width="1.5" stroke-linejoin="round"/>
<path d="M116.2 219.5 L122.6 224.6 L126.5 225.2" fill="none" stroke="#e8730c" stroke-width="1.3" />
<path d="M122.2 212.6 L125.6 209.8 L133.6 217.4 L130.4 220.6 Z" fill="#fff" stroke="#444" stroke-width="1.5" stroke-linejoin="round"/>
<path d="M127.3 211.4 L133.4 207.6 Q135.6 207.4 135.8 209.6 L131.6 215.5" fill="#fff" stroke="#444" stroke-width="1.5" stroke-linejoin="round"/>
<path d="M192 246.8 H182.8 V256" fill="none" stroke="#444" stroke-width="1.5" />
<path d="M186 250 L193.2 257.2" fill="none" stroke="#444" stroke-width="1.5" />
<path d="M193.2 251 V257.2 H187" fill="none" stroke="#444" stroke-width="1.5" />
<path d="M543 246.8 H533.8 V256" fill="none" stroke="#444" stroke-width="1.5" />
<path d="M537 250 L544.2 257.2" fill="none" stroke="#444" stroke-width="1.5" />
<path d="M544.2 251 V257.2 H538" fill="none" stroke="#444" stroke-width="1.5" />
<path d="M1088.8 246.8 H1079.6 V256" fill="none" stroke="#444" stroke-width="1.5" />
<path d="M1082.8 250 L1090.0 257.2" fill="none" stroke="#444" stroke-width="1.5" />
<path d="M1090.0 251 V257.2 H1083.8" fill="none" stroke="#444" stroke-width="1.5" />
<path d="M1330.8 246.8 H1321.6 V256" fill="none" stroke="#444" stroke-width="1.5" />
<path d="M1324.8 250 L1332.0 257.2" fill="none" stroke="#444" stroke-width="1.5" />
<path d="M1332.0 251 V257.2 H1325.8" fill="none" stroke="#444" stroke-width="1.5" />
<polyline points="380.20,151.95 384.00,155.65 387.80,151.95" fill="none" stroke="#262626" stroke-width="1.6" stroke-linejoin="miter"/>
<polyline points="448.20,151.95 452.00,155.65 455.80,151.95" fill="none" stroke="#262626" stroke-width="1.6" stroke-linejoin="miter"/>
<polyline points="486.8,147 490.3,142.8 493.8,147" fill="none" stroke="#1e8bcd" stroke-width="1.8"/>
<polyline points="525.5,143.2 529.2,147.4 532.9,143.2" fill="none" stroke="#1e8bcd" stroke-width="1.8"/>
<line x1="302" y1="209.6" x2="314" y2="209.6" stroke="#333" stroke-width="1.3" stroke-linecap="butt"/>
<polyline points="332.20,199.55 336.00,203.25 339.80,199.55" fill="none" stroke="#262626" stroke-width="1.6" stroke-linejoin="miter"/>
<polyline points="397.40,199.55 401.20,203.25 405.00,199.55" fill="none" stroke="#262626" stroke-width="1.6" stroke-linejoin="miter"/>
<polyline points="462.20,199.55 466.00,203.25 469.80,199.55" fill="none" stroke="#262626" stroke-width="1.6" stroke-linejoin="miter"/>
<polyline points="523.40,199.55 527.20,203.25 531.00,199.55" fill="none" stroke="#262626" stroke-width="1.6" stroke-linejoin="miter"/>
<path d="M361 189.8 H384" stroke="#333" stroke-width="1.5" stroke-dasharray="1.5 1.5" fill="none"/><path d="M361.8 189 V209" stroke="#333" stroke-width="1.5" stroke-dasharray="1.5 1.5" fill="none"/><path d="M382.9 189 V209" stroke="#333" stroke-width="1.5" stroke-dasharray="1.5 1.5" fill="none"/><path d="M372.3 192 V209" stroke="#333" stroke-width="1.5" stroke-dasharray="1.5 1.5" fill="none"/><path d="M364 200.3 H381.5" stroke="#333" stroke-width="1.5" stroke-dasharray="1.5 1.5" fill="none"/>
<circle cx="372.3" cy="200.3" r="1.4" fill="#fff" stroke="#333" stroke-width="0.9"/>
<line x1="361" y1="210.7" x2="383.7" y2="210.7" stroke="#111" stroke-width="1.7" stroke-linecap="butt"/>
<path d="M429.6 199.4 L437.2 192.3 L444.5 197 L436.6 206 Z" fill="#fafafa" stroke="#3a3a3a" stroke-width="1.6" stroke-linejoin="miter"/>
<path d="M437.1 192.6 L437.4 190.6 Q438.8 188.6 440.1 190.6 L440.4 197.6" fill="none" stroke="#3a3a3a" stroke-width="1.5" />
<path d="M442.8 195.2 Q446.8 194.4 447.6 199 Q448 201.8 446.7 204 Q446.4 199.6 444.4 197.4 Z" fill="#1565c0" stroke="#1565c0" stroke-width="0.8" stroke-linejoin="round"/>
<rect x="426" y="207" width="24.1" height="6" rx="0" fill="#ffff00" stroke="none" stroke-width="1.5" />
<rect x="487" y="207" width="24.1" height="6" rx="0" fill="#ff0000" stroke="none" stroke-width="1.5" />
<line x1="570" y1="141.4" x2="591.7" y2="141.4" stroke="#444" stroke-width="1.6" stroke-linecap="butt"/>
<line x1="573.6" y1="147.6" x2="588.2" y2="147.6" stroke="#444" stroke-width="1.6" stroke-linecap="butt"/>
<line x1="570" y1="153.7" x2="591.7" y2="153.7" stroke="#444" stroke-width="1.6" stroke-linecap="butt"/>
<line x1="609" y1="146" x2="630.7" y2="146" stroke="#444" stroke-width="1.6" stroke-linecap="butt"/>
<line x1="612.6" y1="152.1" x2="627.2" y2="152.1" stroke="#444" stroke-width="1.6" stroke-linecap="butt"/>
<line x1="609" y1="158.2" x2="630.7" y2="158.2" stroke="#444" stroke-width="1.6" stroke-linecap="butt"/>
<line x1="648.3" y1="152" x2="670.0" y2="152" stroke="#444" stroke-width="1.6" stroke-linecap="butt"/>
<line x1="651.9" y1="158.1" x2="666.5" y2="158.1" stroke="#444" stroke-width="1.6" stroke-linecap="butt"/>
<line x1="648.3" y1="164.3" x2="670.0" y2="164.3" stroke="#444" stroke-width="1.6" stroke-linecap="butt"/>
<line x1="570" y1="191" x2="591.7" y2="191" stroke="#444" stroke-width="1.6" stroke-linecap="butt"/>
<line x1="570" y1="197.1" x2="585.5" y2="197.1" stroke="#444" stroke-width="1.6" stroke-linecap="butt"/>
<line x1="570" y1="203.3" x2="591.7" y2="203.3" stroke="#444" stroke-width="1.6" stroke-linecap="butt"/>
<line x1="570" y1="209.5" x2="585.5" y2="209.5" stroke="#444" stroke-width="1.6" stroke-linecap="butt"/>
<line x1="609" y1="191" x2="630.7" y2="191" stroke="#444" stroke-width="1.6" stroke-linecap="butt"/>
<line x1="612.6" y1="197.1" x2="627.2" y2="197.1" stroke="#444" stroke-width="1.6" stroke-linecap="butt"/>
<line x1="609" y1="203.3" x2="630.7" y2="203.3" stroke="#444" stroke-width="1.6" stroke-linecap="butt"/>
<line x1="612.6" y1="209.5" x2="627.2" y2="209.5" stroke="#444" stroke-width="1.6" stroke-linecap="butt"/>
<line x1="648.3" y1="191" x2="670.0" y2="191" stroke="#444" stroke-width="1.6" stroke-linecap="butt"/>
<line x1="654.6999999999999" y1="197.1" x2="670.0" y2="197.1" stroke="#444" stroke-width="1.6" stroke-linecap="butt"/>
<line x1="648.3" y1="203.3" x2="670.0" y2="203.3" stroke="#444" stroke-width="1.6" stroke-linecap="butt"/>
<line x1="654.6999999999999" y1="209.5" x2="670.0" y2="209.5" stroke="#444" stroke-width="1.6" stroke-linecap="butt"/>
<line x1="691.3" y1="191" x2="712.8" y2="191" stroke="#444" stroke-width="1.6" stroke-linecap="butt"/>
<line x1="691.3" y1="209.5" x2="712.8" y2="209.5" stroke="#444" stroke-width="1.6" stroke-linecap="butt"/>
<line x1="704.3" y1="197.1" x2="712.8" y2="197.1" stroke="#444" stroke-width="1.6" stroke-linecap="butt"/>
<line x1="704.3" y1="203.3" x2="712.8" y2="203.3" stroke="#444" stroke-width="1.6" stroke-linecap="butt"/>
<path d="M701.8 200.2 H692.0999999999999 M696.3 196 L692.0999999999999 200.2 L696.3 204.4" fill="none" stroke="#1e8bcd" stroke-width="1.7" />
<line x1="730.4" y1="191" x2="751.9" y2="191" stroke="#444" stroke-width="1.6" stroke-linecap="butt"/>
<line x1="730.4" y1="209.5" x2="751.9" y2="209.5" stroke="#444" stroke-width="1.6" stroke-linecap="butt"/>
<line x1="743.4" y1="197.1" x2="751.9" y2="197.1" stroke="#444" stroke-width="1.6" stroke-linecap="butt"/>
<line x1="743.4" y1="203.3" x2="751.9" y2="203.3" stroke="#444" stroke-width="1.6" stroke-linecap="butt"/>
<path d="M730.4 200.2 H740.1 M735.9 196 L740.1 200.2 L735.9 204.4" fill="none" stroke="#1e8bcd" stroke-width="1.7" />
<text x="0" y="0" transform="translate(694.4,158.4) rotate(-45)" font-family="Liberation Sans, sans-serif" font-size="15" fill="#444">ab</text>
<path d="M698.2 163 L713.4 147.8 M706.4 147.6 H713.6 V154.8" fill="none" stroke="#1e8bcd" stroke-width="1.7" />
<polyline points="723.60,151.65 727.40,155.35 731.20,151.65" fill="none" stroke="#262626" stroke-width="1.6" stroke-linejoin="miter"/>
<text x="787.4" y="152.8" font-family="Liberation Sans, sans-serif" font-size="13.8" fill="#444">ab</text>
<text x="787.6" y="163.8" font-family="Liberation Sans, sans-serif" font-size="13.8" fill="#444">c</text>
<path d="M804.8 152.5 Q808.6 156 805.4 159.6 Q803.5 161 797.5 160.8 M801.5 156.6 L797 160.8 L801.5 165" fill="none" stroke="#1e8bcd" stroke-width="1.7" />
<rect x="785" y="189.8" width="21" height="20.8" fill="#f3f3f3" stroke="#b4b4b4" stroke-width="1.5"/>
<line x1="785" y1="194.2" x2="806" y2="194.2" stroke="#b4b4b4" stroke-width="1.3" stroke-linecap="butt"/>
<line x1="785" y1="206.2" x2="806" y2="206.2" stroke="#b4b4b4" stroke-width="1.3" stroke-linecap="butt"/>
<line x1="795.5" y1="189.8" x2="795.5" y2="194.2" stroke="#b4b4b4" stroke-width="1.3" stroke-linecap="butt"/>
<line x1="795.5" y1="206.2" x2="795.5" y2="210.6" stroke="#b4b4b4" stroke-width="1.3" stroke-linecap="butt"/>
<path d="M788.6 200.2 H802.4 M791.4 197.4 L788.6 200.2 L791.4 203 M799.6 197.4 L802.4 200.2 L799.6 203" fill="none" stroke="#b4b4b4" stroke-width="1.3" />
<polyline points="1002.20,198.85 1006.00,202.55 1009.80,198.85" fill="none" stroke="#b4b4b4" stroke-width="1.6" stroke-linejoin="miter"/>
<defs><clipPath id="avc"><circle cx="2308" cy="36" r="17.4"/></clipPath></defs>
<g clip-path="url(#avc)">
<rect x="2289" y="17" width="38" height="38" fill="#ebe2d5"/>
<rect x="2289" y="38" width="10" height="6" fill="#d9cfc4"/>
<rect x="2310.2" y="23.4" width="4.6" height="6.2" fill="#2a2622"/><rect x="2311.6" y="24.6" width="1.9" height="4" fill="#d8a23a"/>
<rect x="2320" y="24.5" width="4" height="4.5" fill="#2a2622"/>
<rect x="2313" y="36" width="10.6" height="13.4" fill="#2e2a2a"/><ellipse cx="2318.2" cy="41.6" rx="2" ry="1.7" fill="#f09a2a"/><rect x="2316.5" y="44" width="3.4" height="3.4" fill="#6a5a2a"/>
<path d="M2291 37 L2296 35.6 L2303 36 Q2306 28 2308.5 32 L2313.8 44 V49.8 H2291 Z" fill="#14110f"/>
<path d="M2297.8 38.5 L2304 38.5 L2304.4 49.8 H2298.4 Z" fill="#f0e4e0"/>
<ellipse cx="2299.8" cy="29" rx="3.6" ry="3.2" fill="#15110f"/>
<ellipse cx="2299.7" cy="31.9" rx="3.1" ry="3.5" fill="#c98a4e"/>
<path d="M2296.6 33.6 Q2299.8 35.2 2303 33.6 Q2302.8 37.4 2299.8 37.6 Q2296.8 37.4 2296.6 33.6 Z" fill="#2a1a12"/>
<rect x="2289" y="49.6" width="38" height="6" fill="#a87a3a"/>
<ellipse cx="2297" cy="50.5" rx="3" ry="1.6" fill="#e0a050"/>
</g>
<circle cx="2308" cy="36" r="17.6" fill="none" stroke="#e02424" stroke-width="1.2"/>
<polyline points="1314.20,151.95 1318.00,155.65 1321.80,151.95" fill="none" stroke="#262626" stroke-width="1.6" stroke-linejoin="miter"/>
<polyline points="1151.20,199.65 1155.00,203.35 1158.80,199.65" fill="none" stroke="#262626" stroke-width="1.6" stroke-linejoin="miter"/>
<path d="M1130 207.2 H1115.8 V193.8 H1138.2 V198" fill="none" stroke="#444" stroke-width="1.5" />
<text x="1118.2" y="204.6" font-family="Liberation Sans, sans-serif" font-size="10.5" fill="#444">CO</text>
<path d="M1127.6 201.4 V210 Q1127.6 212.6 1133.4 212.6 Q1139.2 212.6 1139.2 210 V201.4" fill="#fff" stroke="#e8730c" stroke-width="1.5"/>
<ellipse cx="1133.4" cy="201.4" rx="5.8" ry="2.5" fill="#fff" stroke="#e8730c" stroke-width="1.5"/>
<path d="M1127.6 205.8 Q1127.6 208.3 1133.4 208.3 Q1139.2 208.3 1139.2 205.8" fill="none" stroke="#e8730c" stroke-width="1.4" />
<text x="1271.4" y="199.6" font-family="Liberation Sans, sans-serif" font-size="14" fill="#444">,0</text>
<text x="1263" y="211.6" font-family="Liberation Sans, sans-serif" font-size="14" fill="#444">,00</text>
<path d="M1271.6 195.4 H1258.6 M1263 191 L1258.6 195.4 L1263 199.8" fill="none" stroke="#1e8bcd" stroke-width="1.6" />
<text x="1302" y="199.6" font-family="Liberation Sans, sans-serif" font-size="14" fill="#444">,00</text>
<text x="1310.6" y="211.6" font-family="Liberation Sans, sans-serif" font-size="14" fill="#444">,0</text>
<path d="M1297.4 206.6 H1310.4 M1306 202.2 L1310.4 206.6 L1306 211" fill="none" stroke="#1e8bcd" stroke-width="1.6" />
<rect x="1389.9" y="135" width="40.4" height="31.8" fill="#fff" stroke="#444" stroke-width="1.5"/>
<line x1="1389.9" y1="145.6" x2="1430.3000000000002" y2="145.6" stroke="#444" stroke-width="1.3" stroke-linecap="butt"/>
<line x1="1389.9" y1="156.2" x2="1430.3000000000002" y2="156.2" stroke="#444" stroke-width="1.3" stroke-linecap="butt"/>
<line x1="1397.4" y1="135" x2="1397.4" y2="166.8" stroke="#444" stroke-width="1.3" stroke-linecap="butt"/>
<line x1="1422.9" y1="135" x2="1422.9" y2="166.8" stroke="#444" stroke-width="1.3" stroke-linecap="butt"/>
<line x1="1415.4" y1="135" x2="1415.4" y2="166.8" stroke="#444" stroke-width="1.3" stroke-linecap="butt"/>
<rect x="1397.9" y="134.8" width="17.6" height="10.799999999999999" fill="#ff9aa0" stroke="#e02a1f" stroke-width="1.5"/>
<rect x="1397.9" y="156.2" width="20.6" height="10.799999999999999" fill="#ff9aa0" stroke="#e02a1f" stroke-width="1.5"/>
<rect x="1397.9" y="146.2" width="11.5" height="9.4" fill="#8ec3ee" stroke="#1a6fc0" stroke-width="1.5"/>
<polyline points="1454.60,212.05 1458.40,215.75 1462.20,212.05" fill="none" stroke="#262626" stroke-width="1.6" stroke-linejoin="miter"/>
<rect x="1516.9" y="135.2" width="40.6" height="31.6" fill="#fff" stroke="#444" stroke-width="1.5"/>
<rect x="1530.1000000000001" y="145.7" width="27.4" height="21.1" fill="#8ec3ee" stroke="#1a78c8" stroke-width="1.4"/>
<line x1="1530.1000000000001" y1="135.2" x2="1530.1000000000001" y2="166.79999999999998" stroke="#444" stroke-width="1.3" stroke-linecap="butt"/>
<line x1="1543.9" y1="135.2" x2="1543.9" y2="145.7" stroke="#444" stroke-width="1.3" stroke-linecap="butt"/>
<line x1="1516.9" y1="145.7" x2="1557.5" y2="145.7" stroke="#444" stroke-width="1.3" stroke-linecap="butt"/>
<line x1="1516.9" y1="156.2" x2="1530.1000000000001" y2="156.2" stroke="#444" stroke-width="1.3" stroke-linecap="butt"/>
<line x1="1543.9" y1="145.7" x2="1543.9" y2="166.79999999999998" stroke="#1a78c8" stroke-width="1.3" stroke-linecap="butt"/>
<line x1="1530.1000000000001" y1="156.2" x2="1557.5" y2="156.2" stroke="#1a78c8" stroke-width="1.3" stroke-linecap="butt"/>
<path d="M1559 146.4 Q1561.4 147.6 1560.2 150.4 L1545.5 164.6 L1541.8 161.4 L1555.5 147.0 Q1557.4 145.8 1559 146.4 Z" fill="#fff" stroke="#444" stroke-width="1.5" stroke-linejoin="round"/>
<path d="M1541.4 161.6 Q1536.5 161.4 1534.4 165.8 Q1532.6 168.8 1527.6 168.8 Q1532.5 174.0 1539 172.0 Q1544.4 169.8 1545 165.0 Z" fill="#8ec3ee" stroke="#1a78c8" stroke-width="1.5" stroke-linejoin="round"/>
<polyline points="1559.50,212.05 1563.30,215.75 1567.10,212.05" fill="none" stroke="#262626" stroke-width="1.6" stroke-linejoin="miter"/>
<path d="M1626.9 135.2 H1667.5 V142.6 M1626.9 135.2 V166.79999999999998 H1651.9" fill="none" stroke="#444" stroke-width="1.5"/>
<line x1="1633.5" y1="135.2" x2="1633.5" y2="166.79999999999998" stroke="#444" stroke-width="1.3" stroke-linecap="butt"/>
<line x1="1660.5" y1="135.2" x2="1660.5" y2="142.6" stroke="#444" stroke-width="1.3" stroke-linecap="butt"/>
<line x1="1626.9" y1="142.6" x2="1667.5" y2="142.6" stroke="#444" stroke-width="1.3" stroke-linecap="butt"/>
<line x1="1626.9" y1="159.6" x2="1634.9" y2="159.6" stroke="#444" stroke-width="1.3" stroke-linecap="butt"/>
<rect x="1633.9" y="142.79999999999998" width="26.4" height="16.6" fill="#8ec3ee" stroke="#1a78c8" stroke-width="1.5"/>
<path d="M1669 146.4 Q1671.4 147.6 1670.2 150.4 L1655.5 164.6 L1651.8 161.4 L1665.5 147.0 Q1667.4 145.8 1669 146.4 Z" fill="#fff" stroke="#444" stroke-width="1.5" stroke-linejoin="round"/>
<path d="M1651.4 161.6 Q1646.5 161.4 1644.4 165.8 Q1642.6 168.8 1637.6 168.8 Q1642.5 174.0 1649 172.0 Q1654.4 169.8 1655 165.0 Z" fill="#8ec3ee" stroke="#1a78c8" stroke-width="1.5" stroke-linejoin="round"/>
<polyline points="1668.40,212.05 1672.20,215.75 1676.00,212.05" fill="none" stroke="#262626" stroke-width="1.6" stroke-linejoin="miter"/>
<rect x="1719.6" y="131.3" width="23.2" height="20" fill="#fff" stroke="#444" stroke-width="1.5"/>
<line x1="1727.3333333333333" y1="131.3" x2="1727.3333333333333" y2="151.3" stroke="#444" stroke-width="1.2" stroke-linecap="butt"/>
<line x1="1719.6" y1="137.96666666666667" x2="1742.8" y2="137.96666666666667" stroke="#444" stroke-width="1.2" stroke-linecap="butt"/>
<line x1="1735.0666666666666" y1="131.3" x2="1735.0666666666666" y2="151.3" stroke="#444" stroke-width="1.2" stroke-linecap="butt"/>
<line x1="1719.6" y1="144.63333333333335" x2="1742.8" y2="144.63333333333335" stroke="#444" stroke-width="1.2" stroke-linecap="butt"/>
<rect x="1727.4" y="137.4" width="16" height="7.4" fill="#fff"/><rect x="1732" y="137.6" width="11.2" height="7" fill="#8ec3ee" stroke="#1a78c8" stroke-width="1.4"/>
<path d="M1731.6 141.1 H1719.4 M1723.8 137 L1719.4 141.1 L1723.8 145.2" fill="none" stroke="#1e8bcd" stroke-width="1.6" />
<polyline points="1824.20,139.65 1828.00,143.35 1831.80,139.65" fill="none" stroke="#262626" stroke-width="1.6" stroke-linejoin="miter"/>
<rect x="1719.6" y="170" width="23.2" height="20" fill="#fff" stroke="#444" stroke-width="1.5"/>
<line x1="1727.3333333333333" y1="170" x2="1727.3333333333333" y2="190" stroke="#444" stroke-width="1.2" stroke-linecap="butt"/>
<line x1="1719.6" y1="176.66666666666666" x2="1742.8" y2="176.66666666666666" stroke="#444" stroke-width="1.2" stroke-linecap="butt"/>
<line x1="1735.0666666666666" y1="170" x2="1735.0666666666666" y2="190" stroke="#444" stroke-width="1.2" stroke-linecap="butt"/>
<line x1="1719.6" y1="183.33333333333334" x2="1742.8" y2="183.33333333333334" stroke="#444" stroke-width="1.2" stroke-linecap="butt"/>
<rect x="1718.8" y="175.4" width="25" height="9.6" fill="#fff"/>
<rect x="1724" y="176" width="7.4" height="8" fill="#8ec3ee" stroke="#1a6fc0" stroke-width="1.5"/>
<path d="M1731.8 178.2 L1733.8 180 L1731.8 181.8 Z" fill="#1a6fc0" stroke="#1a6fc0"/>
<path d="M1735.6 176.2 L1743 183.8 M1743 176.2 L1735.6 183.8" fill="none" stroke="#e8392b" stroke-width="1.6" />
<polyline points="1825.20,178.65 1829.00,182.35 1832.80,178.65" fill="none" stroke="#262626" stroke-width="1.6" stroke-linejoin="miter"/>
<rect x="1719.6" y="211.4" width="23.2" height="18.6" fill="#fff" stroke="#444" stroke-width="1.5"/>
<line x1="1727.3333333333333" y1="211.4" x2="1727.3333333333333" y2="230.0" stroke="#444" stroke-width="1.2" stroke-linecap="butt"/>
<line x1="1719.6" y1="217.6" x2="1742.8" y2="217.6" stroke="#444" stroke-width="1.2" stroke-linecap="butt"/>
<line x1="1735.0666666666666" y1="211.4" x2="1735.0666666666666" y2="230.0" stroke="#444" stroke-width="1.2" stroke-linecap="butt"/>
<line x1="1719.6" y1="223.8" x2="1742.8" y2="223.8" stroke="#444" stroke-width="1.2" stroke-linecap="butt"/>
<rect x="1726" y="216.4" width="10.6" height="7.6" fill="#8ec3ee" stroke="#1a78c8" stroke-width="1.5"/>
<rect x="1722" y="209.6" width="18.6" height="3" fill="#fff"/>
<path d="M1724 208.4 H1739 M1724 206.6 V210.2 M1739 206.6 V210.2" fill="none" stroke="#1e8bcd" stroke-width="1.4" />
<polyline points="1827.60,217.15 1831.40,220.85 1835.20,217.15" fill="none" stroke="#262626" stroke-width="1.6" stroke-linejoin="miter"/>
<path d="M1902.4 135.4 V131.6 H1885.6 L1894.6 141.2 L1885.6 150.8 H1902.4 V147" fill="none" stroke="#444" stroke-width="1.6" stroke-linejoin="miter"/>
<polyline points="1925.20,139.65 1929.00,143.35 1932.80,139.65" fill="none" stroke="#262626" stroke-width="1.6" stroke-linejoin="miter"/>
<rect x="1882.8" y="170.2" width="22.2" height="19.2" fill="#fafafa" stroke="#444" stroke-width="1.5"/>
<line x1="1882.8" y1="173.4" x2="1905" y2="173.4" stroke="#444" stroke-width="1.3" stroke-linecap="butt"/>
<path d="M1893.9 175.8 V186.6 M1889.4 182.2 L1893.9 186.6 L1898.4 182.2" fill="none" stroke="#1e8bcd" stroke-width="1.6" />
<polyline points="1915.40,178.65 1919.20,182.35 1923.00,178.65" fill="none" stroke="#262626" stroke-width="1.6" stroke-linejoin="miter"/>
<path d="M1883.4 221.4 L1896.8 208.6 L1904.4 216.2 L1890.4 229.4 Z" fill="#fafafa" stroke="#9a2fb0" stroke-width="1.5" stroke-linejoin="round"/>
<path d="M1883.4 221.4 L1887.6 217.4 L1894.6 225.2 L1890.4 229.4 Z" fill="#d9a0e0" stroke="#9a2fb0" stroke-width="1.5" stroke-linejoin="round"/>
<polyline points="1915.40,217.15 1919.20,220.85 1923.00,217.15" fill="none" stroke="#262626" stroke-width="1.6" stroke-linejoin="miter"/>
<text x="1970.4" y="149.6" font-family="Liberation Sans, sans-serif" font-size="25.5" fill="#1e8bcd">A</text>
<text x="1970.6" y="170.4" font-family="Liberation Sans, sans-serif" font-size="24.5" fill="#444">Z</text>
<path d="M1989.4 141 H2012.4 V143.4 L2003.8 153.6 V163 H1998.2 V153.6 L1989.4 143.4 Z" fill="#fafafa" stroke="#444" stroke-width="1.5" stroke-linejoin="round"/>
<polyline points="2019.70,212.05 2023.50,215.75 2027.30,212.05" fill="none" stroke="#262626" stroke-width="1.6" stroke-linejoin="miter"/>
<circle cx="2095.2" cy="145.6" r="14.8" fill="#fafafa" stroke="#444" stroke-width="1.6"/>
<line x1="2084.4" y1="156.6" x2="2067.8" y2="173.2" stroke="#444" stroke-width="1.7" stroke-linecap="butt"/>
<polyline points="2128.70,212.05 2132.50,215.75 2136.30,212.05" fill="none" stroke="#262626" stroke-width="1.6" stroke-linejoin="miter"/>
<rect x="2202.8" y="131.1" width="40.4" height="40" fill="none" stroke="#d83b01" stroke-width="1.7"/>
<rect x="2207.4" y="135.6" width="13" height="13" fill="none" stroke="#d83b01" stroke-width="1.6"/>
<rect x="2225.6" y="135.6" width="13" height="13" fill="none" stroke="#d83b01" stroke-width="1.6"/>
<rect x="2207.4" y="153.6" width="13" height="13" fill="none" stroke="#d83b01" stroke-width="1.6"/>
<rect x="2225.6" y="153.6" width="13" height="13" fill="none" stroke="#d83b01" stroke-width="1.6"/>
<defs>
<linearGradient id="cp1" x1="0" y1="0" x2="0" y2="1"><stop offset="0" stop-color="#1a9cf0"/><stop offset=".3" stop-color="#2290c8"/><stop offset=".55" stop-color="#4cb070"/><stop offset=".8" stop-color="#c0c420"/><stop offset="1" stop-color="#f4bc10"/></linearGradient>
<linearGradient id="cp2" x1="0" y1="0" x2="0" y2="1"><stop offset="0" stop-color="#a850e4"/><stop offset=".2" stop-color="#b850d8"/><stop offset=".5" stop-color="#e85898"/><stop offset=".8" stop-color="#f4806c"/><stop offset="1" stop-color="#f8a850"/></linearGradient>
<linearGradient id="cp3" x1="0" y1="0" x2="1" y2="1"><stop offset="0" stop-color="#1440c8"/><stop offset=".6" stop-color="#1a60d8"/><stop offset="1" stop-color="#2090e8"/></linearGradient>
<linearGradient id="cp4" x1="0" y1="0" x2="1" y2="1"><stop offset="0" stop-color="#f88040"/><stop offset="1" stop-color="#e83830"/></linearGradient>
</defs>
<path d="M2336 131 H2343.4 Q2346 131 2347 134 L2348.8 139.6 Q2349.6 142 2352.4 142.2 H2334 Z" fill="url(#cp3)"/>
<path d="M2322.6 131 H2340.4 L2333.6 156.2 Q2332.6 159.6 2329.4 159.6 H2318.4 Q2313.4 159.6 2314.4 154.2 L2319 134.6 Q2320 131 2322.6 131 Z" fill="url(#cp1)"/>
<path d="M2321 159.4 H2336 L2334 170.6 H2329 Q2326.4 170.6 2325.4 167.6 L2323.8 162 Q2323.2 160 2321 159.4 Z" fill="url(#cp4)"/>
<path d="M2343 142.2 H2353 Q2358.6 142.2 2357.6 148 L2352.6 167.2 Q2351.6 170.6 2348.4 170.6 H2331.8 L2338.6 145.6 Q2339.6 142.2 2343 142.2 Z" fill="url(#cp2)"/>
<polyline points="2331.60,213.75 2335.40,217.45 2339.20,213.75" fill="none" stroke="#262626" stroke-width="1.6" stroke-linejoin="miter"/>
<path d="M2450.4 152.6 V140.8 L2443.2 133.4 H2426 Q2422.8 133.4 2422.8 136.6 V164.4 Q2422.8 167.6 2426 167.6 H2436.8" fill="none" stroke="#2b6fe0" stroke-width="1.5" stroke-linejoin="round" stroke-linecap="round"/>
<path d="M2428.6 156.2 Q2433.6 151 2435.8 143 Q2436.4 140 2435.4 140.4 Q2434.4 141 2435.6 144.6 Q2438 150.6 2444.4 151.6 Q2446 151.8 2445.4 150.8 Q2443.6 149.8 2438 150.8 Q2432 152.4 2428.6 156.2 Q2427.6 157.2 2428.6 156.2 Z" fill="none" stroke="#2b6fe0" stroke-width="1.0" stroke-linejoin="round"/>
<g transform="translate(2448.8,164.4) rotate(-42)" fill="none" stroke="#2b6fe0" stroke-width="1.9"><rect x="-11.8" y="-3.6" width="12.4" height="7.2" rx="3.6"/><rect x="-0.6" y="-3.6" width="12.4" height="7.2" rx="3.6"/></g>
<polyline points="2519.05,243.20 2526.30,250.80 2533.55,243.20" fill="none" stroke="#333" stroke-width="1.6" stroke-linejoin="miter"/>
<polyline points="140.10,294.10 147.40,301.90 154.70,294.10" fill="none" stroke="#333" stroke-width="1.5" stroke-linejoin="miter"/>
<rect x="177.7" y="288.9" width="3" height="3" fill="#444"/>
<rect x="177.7" y="295.0" width="3" height="3" fill="#444"/>
<rect x="177.7" y="301.2" width="3" height="3" fill="#444"/>
<path d="M204.5 289.4 L221.5 306 M221.5 289.4 L204.5 306" fill="none" stroke="#b0b0b0" stroke-width="1.5" />
<path d="M237.2 298.6 L243.6 305.4 L260.2 289.2" fill="none" stroke="#b0b0b0" stroke-width="1.5" />
<text x="274" y="304" font-family="Liberation Serif, serif" font-style="italic" font-weight="bold" font-size="25" fill="#3a3a3a">f</text>
<text x="284.6" y="304" font-family="Liberation Serif, serif" font-style="italic" font-weight="bold" font-size="21" fill="#3a3a3a">x</text>
<polyline points="305.10,293.90 311.90,300.90 318.70,293.90" fill="none" stroke="#aaa" stroke-width="1.5" stroke-linejoin="miter"/>
<polyline points="2526.90,290.90 2534.00,299.50 2541.10,290.90" fill="none" stroke="#333" stroke-width="1.6" stroke-linejoin="miter"/>
<polygon points="401.50,493.30 402.82,497.18 406.70,498.50 402.82,499.82 401.50,503.70 400.18,499.82 396.30,498.50 400.18,497.18" fill="#444" stroke="#444" stroke-width="0.6" stroke-linejoin="round"/>
<polygon points="407.60,502.70 408.52,505.38 411.20,506.30 408.52,507.22 407.60,509.90 406.68,507.22 404.00,506.30 406.68,505.38" fill="#444" stroke="#444" stroke-width="0.6" stroke-linejoin="round"/>
<line x1="391.3" y1="507.2" x2="395.8" y2="503" stroke="#444" stroke-width="1.5" stroke-linecap="round"/>
<line x1="396.2" y1="508.5" x2="399.6" y2="505.2" stroke="#444" stroke-width="1.5" stroke-linecap="round"/>
<line x1="391.5" y1="513.3" x2="394.4" y2="510.6" stroke="#444" stroke-width="1.5" stroke-linecap="round"/>
<line x1="397.6" y1="513.3" x2="402.2" y2="508.7" stroke="#444" stroke-width="1.5" stroke-linecap="round"/>
</svg>
</div></body></html>
